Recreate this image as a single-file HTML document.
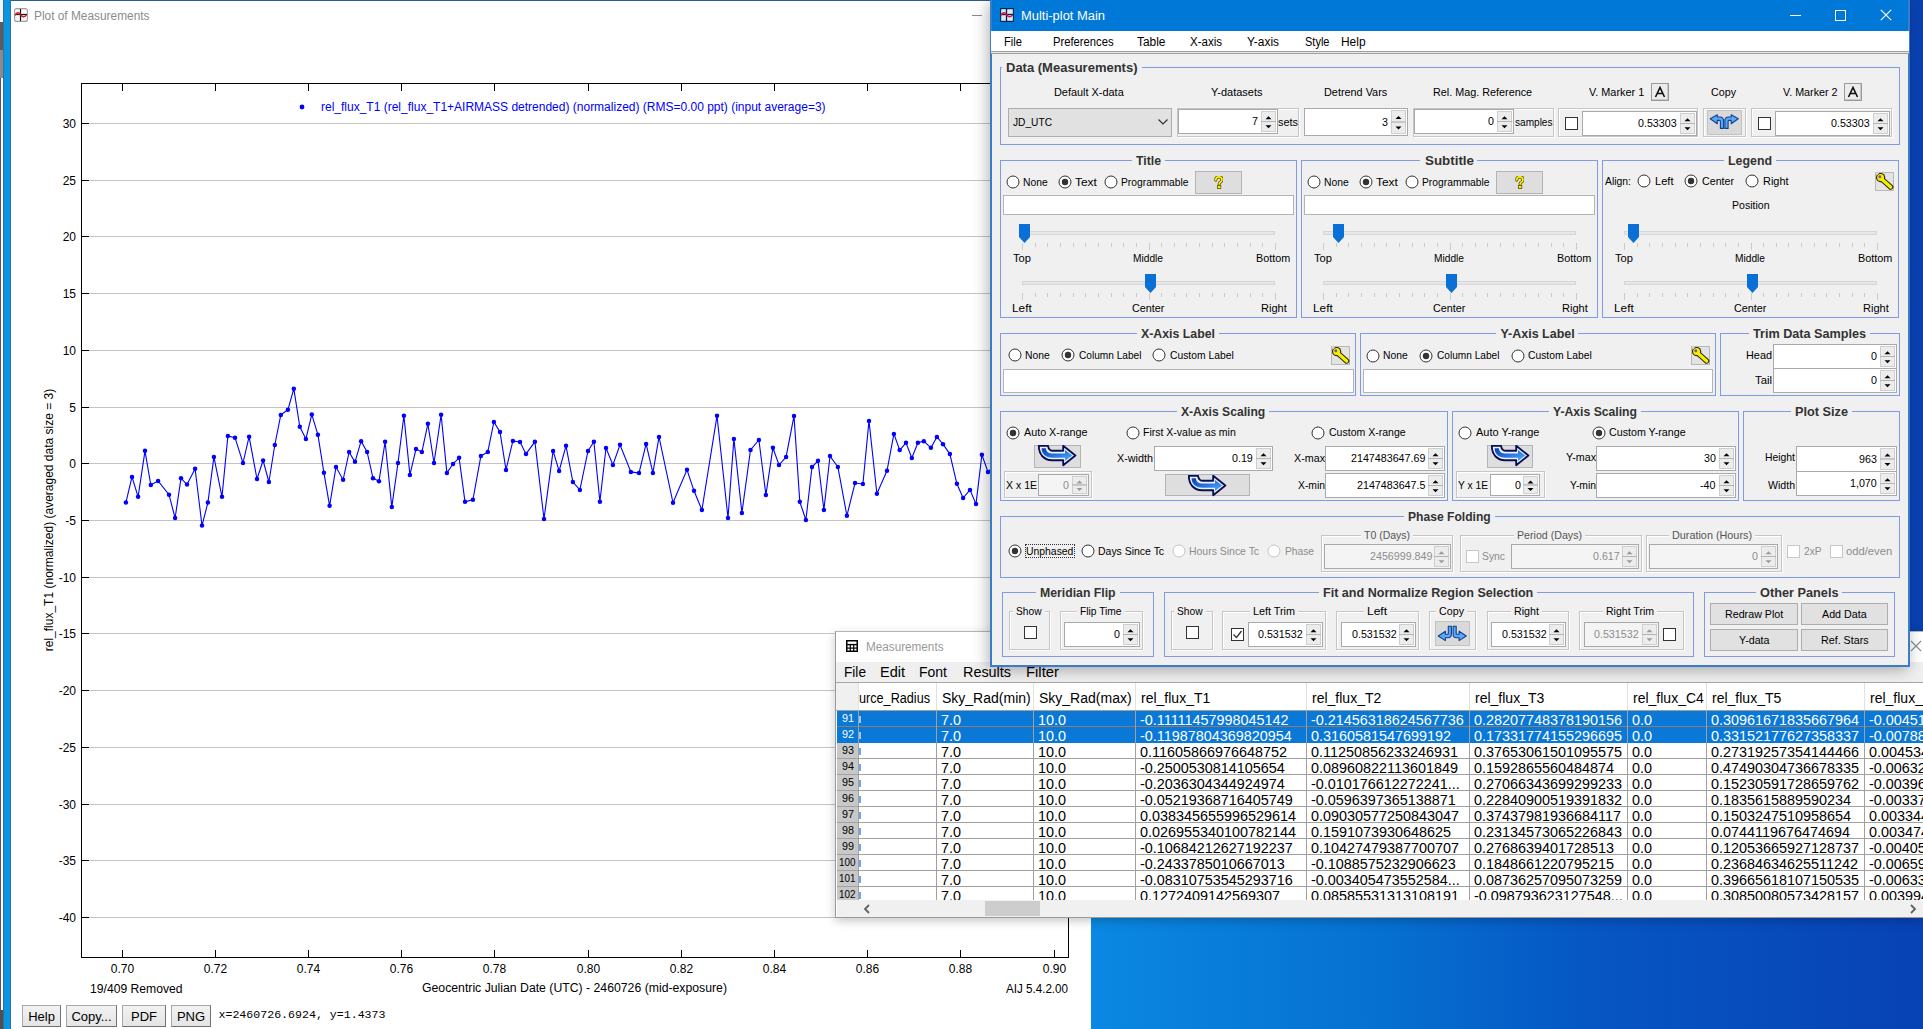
<!DOCTYPE html>
<html><head><meta charset="utf-8"><title>AstroImageJ Multi-plot</title>
<style>
html,body{margin:0;padding:0;}
body{width:1923px;height:1029px;overflow:hidden;position:relative;background:#fff;font-family:"Liberation Sans",sans-serif;}
div{position:absolute;box-sizing:border-box;}
.t{white-space:nowrap;line-height:1;}
svg{position:absolute;}
</style></head><body>
<div style="left:0px;top:0px;width:3px;height:22px;background:#f4f4f4"></div><div style="left:0px;top:22px;width:3px;height:28px;background:#5e5a5e"></div><div style="left:0px;top:50px;width:3px;height:28px;background:#8c888c"></div><div style="left:0px;top:78px;width:3px;height:932px;background:#fbfdff;border-left:1px solid #5a5060"></div><div style="left:0px;top:1010px;width:3px;height:19px;background:#505050"></div><div style="left:3px;top:0px;width:8px;height:1029px;background:#0a94e2;border-left:1px solid #2a7498;border-right:1px solid #2a7498"></div><div style="left:11px;top:0px;width:1080px;height:1px;background:#2a5d8f"></div><div style="left:11px;top:1px;width:1080px;height:1028px;background:#fff"></div><svg style="left:14px;top:8px" width="14" height="14" viewBox="0 0 14 14"><rect x="0.6" y="0.6" width="12.8" height="12.8" rx="2" fill="#f6fafa" stroke="#a89a9a" stroke-width="1.1"/><line x1="6.5" y1="1" x2="6.5" y2="13" stroke="#151515" stroke-width="1.2"/><line x1="1" y1="6.5" x2="13" y2="6.5" stroke="#151515" stroke-width="1.2"/><path d="M1 7.3 C2.5 4.5 4.5 3.6 6.5 6.5 C8.5 9.5 10.5 9.5 12.3 7" fill="none" stroke="#d01830" stroke-width="1.4"/></svg><div class="t" style="left:34.00px;top:10.14px;font-size:12px;color:#8c8c8c;font-family:'Liberation Sans',sans-serif;transform:scaleX(0.9895);transform-origin:0 0;">Plot of Measurements</div><div style="left:972px;top:15px;width:10px;height:1px;background:#8a8a8a"></div><svg style="left:0;top:0" width="1091" height="1029" viewBox="0 0 1091 1029"><rect x="82" y="123" width="986" height="1" fill="#c4c4c4"/><rect x="82" y="180" width="986" height="1" fill="#c4c4c4"/><rect x="82" y="236" width="986" height="1" fill="#c4c4c4"/><rect x="82" y="293" width="986" height="1" fill="#c4c4c4"/><rect x="82" y="350" width="986" height="1" fill="#c4c4c4"/><rect x="82" y="407" width="986" height="1" fill="#c4c4c4"/><rect x="82" y="463" width="986" height="1" fill="#c4c4c4"/><rect x="82" y="520" width="986" height="1" fill="#c4c4c4"/><rect x="82" y="577" width="986" height="1" fill="#c4c4c4"/><rect x="82" y="633" width="986" height="1" fill="#c4c4c4"/><rect x="82" y="690" width="986" height="1" fill="#c4c4c4"/><rect x="82" y="747" width="986" height="1" fill="#c4c4c4"/><rect x="82" y="804" width="986" height="1" fill="#c4c4c4"/><rect x="82" y="860" width="986" height="1" fill="#c4c4c4"/><rect x="82" y="917" width="986" height="1" fill="#c4c4c4"/><rect x="81" y="83" width="988" height="1" fill="#000"/><rect x="81" y="957" width="988" height="1" fill="#000"/><rect x="81" y="83" width="1" height="875" fill="#000"/><rect x="1068" y="83" width="1" height="875" fill="#000"/><rect x="82" y="123" width="7" height="1" fill="#000"/><rect x="1061" y="123" width="7" height="1" fill="#000"/><rect x="82" y="180" width="7" height="1" fill="#000"/><rect x="1061" y="180" width="7" height="1" fill="#000"/><rect x="82" y="236" width="7" height="1" fill="#000"/><rect x="1061" y="236" width="7" height="1" fill="#000"/><rect x="82" y="293" width="7" height="1" fill="#000"/><rect x="1061" y="293" width="7" height="1" fill="#000"/><rect x="82" y="350" width="7" height="1" fill="#000"/><rect x="1061" y="350" width="7" height="1" fill="#000"/><rect x="82" y="407" width="7" height="1" fill="#000"/><rect x="1061" y="407" width="7" height="1" fill="#000"/><rect x="82" y="463" width="7" height="1" fill="#000"/><rect x="1061" y="463" width="7" height="1" fill="#000"/><rect x="82" y="520" width="7" height="1" fill="#000"/><rect x="1061" y="520" width="7" height="1" fill="#000"/><rect x="82" y="577" width="7" height="1" fill="#000"/><rect x="1061" y="577" width="7" height="1" fill="#000"/><rect x="82" y="633" width="7" height="1" fill="#000"/><rect x="1061" y="633" width="7" height="1" fill="#000"/><rect x="82" y="690" width="7" height="1" fill="#000"/><rect x="1061" y="690" width="7" height="1" fill="#000"/><rect x="82" y="747" width="7" height="1" fill="#000"/><rect x="1061" y="747" width="7" height="1" fill="#000"/><rect x="82" y="804" width="7" height="1" fill="#000"/><rect x="1061" y="804" width="7" height="1" fill="#000"/><rect x="82" y="860" width="7" height="1" fill="#000"/><rect x="1061" y="860" width="7" height="1" fill="#000"/><rect x="82" y="917" width="7" height="1" fill="#000"/><rect x="1061" y="917" width="7" height="1" fill="#000"/><rect x="122" y="84" width="1" height="7" fill="#000"/><rect x="122" y="950" width="1" height="7" fill="#000"/><rect x="215" y="84" width="1" height="7" fill="#000"/><rect x="215" y="950" width="1" height="7" fill="#000"/><rect x="308" y="84" width="1" height="7" fill="#000"/><rect x="308" y="950" width="1" height="7" fill="#000"/><rect x="401" y="84" width="1" height="7" fill="#000"/><rect x="401" y="950" width="1" height="7" fill="#000"/><rect x="494" y="84" width="1" height="7" fill="#000"/><rect x="494" y="950" width="1" height="7" fill="#000"/><rect x="588" y="84" width="1" height="7" fill="#000"/><rect x="588" y="950" width="1" height="7" fill="#000"/><rect x="681" y="84" width="1" height="7" fill="#000"/><rect x="681" y="950" width="1" height="7" fill="#000"/><rect x="774" y="84" width="1" height="7" fill="#000"/><rect x="774" y="950" width="1" height="7" fill="#000"/><rect x="867" y="84" width="1" height="7" fill="#000"/><rect x="867" y="950" width="1" height="7" fill="#000"/><rect x="960" y="84" width="1" height="7" fill="#000"/><rect x="960" y="950" width="1" height="7" fill="#000"/><rect x="1054" y="84" width="1" height="7" fill="#000"/><rect x="1054" y="950" width="1" height="7" fill="#000"/><polyline points="125.9,502.6 132.0,476.9 138.1,496.8 145.0,450.8 150.8,485.0 158.1,481.0 169.0,494.7 175.1,518.0 181.0,478.2 187.0,484.6 195.1,468.8 202.0,525.6 207.9,502.6 213.9,456.9 222.0,496.8 227.9,435.9 235.0,437.7 243.0,463.0 249.1,436.7 257.0,479.0 263.1,460.5 268.9,482.0 274.8,445.0 280.8,414.9 287.9,409.8 293.8,388.7 299.8,426.8 305.9,438.9 311.8,414.6 317.9,434.7 323.9,472.7 329.6,505.8 336.0,467.1 343.1,479.8 349.1,452.1 355.0,461.8 361.1,441.2 367.1,451.9 373.0,478.2 379.0,481.2 385.1,441.8 391.8,506.9 398.0,463.0 403.9,415.8 409.9,474.9 416.0,449.0 421.9,451.9 427.9,423.8 434.0,463.0 441.1,414.8 446.9,472.9 453.0,464.0 459.1,457.7 465.0,501.8 472.9,499.8 480.9,455.9 487.8,451.9 493.9,422.0 500.0,431.9 506.0,469.9 512.9,440.9 520.0,442.0 526.0,453.9 534.9,441.8 544.0,519.0 553.1,450.9 559.1,470.9 566.0,445.8 572.9,482.1 579.9,489.9 588.0,450.9 593.9,441.8 599.9,501.8 606.0,448.0 612.9,465.0 620.0,444.8 630.9,471.9 639.0,473.1 646.1,443.9 652.9,472.9 659.0,436.9 673.0,502.8 687.0,469.8 694.0,490.8 701.9,510.0 717.0,415.8 728.0,518.0 733.9,438.9 741.9,512.9 750.5,450.0 758.9,440.0 765.9,494.9 772.9,447.8 779.0,465.0 786.1,456.9 794.0,415.9 799.8,501.8 805.9,520.0 812.0,467.0 818.0,460.8 823.9,509.9 830.0,456.1 837.9,467.0 846.9,515.8 855.0,483.0 862.9,484.0 869.0,420.9 876.9,493.7 887.0,470.8 893.9,433.9 899.7,450.1 906.0,442.8 911.8,457.9 917.9,442.8 923.8,441.2 930.9,447.8 936.9,436.9 943.0,444.2 949.9,454.1 956.9,483.8 963.1,498.0 970.0,489.9 976.0,504.1 981.9,454.7 988.0,471.9 994.0,466.0" fill="none" stroke="#0000ff" stroke-width="1.1"/><circle cx="125.9" cy="502.6" r="2.25" fill="#0000ff"/><circle cx="132.0" cy="476.9" r="2.25" fill="#0000ff"/><circle cx="138.1" cy="496.8" r="2.25" fill="#0000ff"/><circle cx="145.0" cy="450.8" r="2.25" fill="#0000ff"/><circle cx="150.8" cy="485.0" r="2.25" fill="#0000ff"/><circle cx="158.1" cy="481.0" r="2.25" fill="#0000ff"/><circle cx="169.0" cy="494.7" r="2.25" fill="#0000ff"/><circle cx="175.1" cy="518.0" r="2.25" fill="#0000ff"/><circle cx="181.0" cy="478.2" r="2.25" fill="#0000ff"/><circle cx="187.0" cy="484.6" r="2.25" fill="#0000ff"/><circle cx="195.1" cy="468.8" r="2.25" fill="#0000ff"/><circle cx="202.0" cy="525.6" r="2.25" fill="#0000ff"/><circle cx="207.9" cy="502.6" r="2.25" fill="#0000ff"/><circle cx="213.9" cy="456.9" r="2.25" fill="#0000ff"/><circle cx="222.0" cy="496.8" r="2.25" fill="#0000ff"/><circle cx="227.9" cy="435.9" r="2.25" fill="#0000ff"/><circle cx="235.0" cy="437.7" r="2.25" fill="#0000ff"/><circle cx="243.0" cy="463.0" r="2.25" fill="#0000ff"/><circle cx="249.1" cy="436.7" r="2.25" fill="#0000ff"/><circle cx="257.0" cy="479.0" r="2.25" fill="#0000ff"/><circle cx="263.1" cy="460.5" r="2.25" fill="#0000ff"/><circle cx="268.9" cy="482.0" r="2.25" fill="#0000ff"/><circle cx="274.8" cy="445.0" r="2.25" fill="#0000ff"/><circle cx="280.8" cy="414.9" r="2.25" fill="#0000ff"/><circle cx="287.9" cy="409.8" r="2.25" fill="#0000ff"/><circle cx="293.8" cy="388.7" r="2.25" fill="#0000ff"/><circle cx="299.8" cy="426.8" r="2.25" fill="#0000ff"/><circle cx="305.9" cy="438.9" r="2.25" fill="#0000ff"/><circle cx="311.8" cy="414.6" r="2.25" fill="#0000ff"/><circle cx="317.9" cy="434.7" r="2.25" fill="#0000ff"/><circle cx="323.9" cy="472.7" r="2.25" fill="#0000ff"/><circle cx="329.6" cy="505.8" r="2.25" fill="#0000ff"/><circle cx="336.0" cy="467.1" r="2.25" fill="#0000ff"/><circle cx="343.1" cy="479.8" r="2.25" fill="#0000ff"/><circle cx="349.1" cy="452.1" r="2.25" fill="#0000ff"/><circle cx="355.0" cy="461.8" r="2.25" fill="#0000ff"/><circle cx="361.1" cy="441.2" r="2.25" fill="#0000ff"/><circle cx="367.1" cy="451.9" r="2.25" fill="#0000ff"/><circle cx="373.0" cy="478.2" r="2.25" fill="#0000ff"/><circle cx="379.0" cy="481.2" r="2.25" fill="#0000ff"/><circle cx="385.1" cy="441.8" r="2.25" fill="#0000ff"/><circle cx="391.8" cy="506.9" r="2.25" fill="#0000ff"/><circle cx="398.0" cy="463.0" r="2.25" fill="#0000ff"/><circle cx="403.9" cy="415.8" r="2.25" fill="#0000ff"/><circle cx="409.9" cy="474.9" r="2.25" fill="#0000ff"/><circle cx="416.0" cy="449.0" r="2.25" fill="#0000ff"/><circle cx="421.9" cy="451.9" r="2.25" fill="#0000ff"/><circle cx="427.9" cy="423.8" r="2.25" fill="#0000ff"/><circle cx="434.0" cy="463.0" r="2.25" fill="#0000ff"/><circle cx="441.1" cy="414.8" r="2.25" fill="#0000ff"/><circle cx="446.9" cy="472.9" r="2.25" fill="#0000ff"/><circle cx="453.0" cy="464.0" r="2.25" fill="#0000ff"/><circle cx="459.1" cy="457.7" r="2.25" fill="#0000ff"/><circle cx="465.0" cy="501.8" r="2.25" fill="#0000ff"/><circle cx="472.9" cy="499.8" r="2.25" fill="#0000ff"/><circle cx="480.9" cy="455.9" r="2.25" fill="#0000ff"/><circle cx="487.8" cy="451.9" r="2.25" fill="#0000ff"/><circle cx="493.9" cy="422.0" r="2.25" fill="#0000ff"/><circle cx="500.0" cy="431.9" r="2.25" fill="#0000ff"/><circle cx="506.0" cy="469.9" r="2.25" fill="#0000ff"/><circle cx="512.9" cy="440.9" r="2.25" fill="#0000ff"/><circle cx="520.0" cy="442.0" r="2.25" fill="#0000ff"/><circle cx="526.0" cy="453.9" r="2.25" fill="#0000ff"/><circle cx="534.9" cy="441.8" r="2.25" fill="#0000ff"/><circle cx="544.0" cy="519.0" r="2.25" fill="#0000ff"/><circle cx="553.1" cy="450.9" r="2.25" fill="#0000ff"/><circle cx="559.1" cy="470.9" r="2.25" fill="#0000ff"/><circle cx="566.0" cy="445.8" r="2.25" fill="#0000ff"/><circle cx="572.9" cy="482.1" r="2.25" fill="#0000ff"/><circle cx="579.9" cy="489.9" r="2.25" fill="#0000ff"/><circle cx="588.0" cy="450.9" r="2.25" fill="#0000ff"/><circle cx="593.9" cy="441.8" r="2.25" fill="#0000ff"/><circle cx="599.9" cy="501.8" r="2.25" fill="#0000ff"/><circle cx="606.0" cy="448.0" r="2.25" fill="#0000ff"/><circle cx="612.9" cy="465.0" r="2.25" fill="#0000ff"/><circle cx="620.0" cy="444.8" r="2.25" fill="#0000ff"/><circle cx="630.9" cy="471.9" r="2.25" fill="#0000ff"/><circle cx="639.0" cy="473.1" r="2.25" fill="#0000ff"/><circle cx="646.1" cy="443.9" r="2.25" fill="#0000ff"/><circle cx="652.9" cy="472.9" r="2.25" fill="#0000ff"/><circle cx="659.0" cy="436.9" r="2.25" fill="#0000ff"/><circle cx="673.0" cy="502.8" r="2.25" fill="#0000ff"/><circle cx="687.0" cy="469.8" r="2.25" fill="#0000ff"/><circle cx="694.0" cy="490.8" r="2.25" fill="#0000ff"/><circle cx="701.9" cy="510.0" r="2.25" fill="#0000ff"/><circle cx="717.0" cy="415.8" r="2.25" fill="#0000ff"/><circle cx="728.0" cy="518.0" r="2.25" fill="#0000ff"/><circle cx="733.9" cy="438.9" r="2.25" fill="#0000ff"/><circle cx="741.9" cy="512.9" r="2.25" fill="#0000ff"/><circle cx="750.5" cy="450.0" r="2.25" fill="#0000ff"/><circle cx="758.9" cy="440.0" r="2.25" fill="#0000ff"/><circle cx="765.9" cy="494.9" r="2.25" fill="#0000ff"/><circle cx="772.9" cy="447.8" r="2.25" fill="#0000ff"/><circle cx="779.0" cy="465.0" r="2.25" fill="#0000ff"/><circle cx="786.1" cy="456.9" r="2.25" fill="#0000ff"/><circle cx="794.0" cy="415.9" r="2.25" fill="#0000ff"/><circle cx="799.8" cy="501.8" r="2.25" fill="#0000ff"/><circle cx="805.9" cy="520.0" r="2.25" fill="#0000ff"/><circle cx="812.0" cy="467.0" r="2.25" fill="#0000ff"/><circle cx="818.0" cy="460.8" r="2.25" fill="#0000ff"/><circle cx="823.9" cy="509.9" r="2.25" fill="#0000ff"/><circle cx="830.0" cy="456.1" r="2.25" fill="#0000ff"/><circle cx="837.9" cy="467.0" r="2.25" fill="#0000ff"/><circle cx="846.9" cy="515.8" r="2.25" fill="#0000ff"/><circle cx="855.0" cy="483.0" r="2.25" fill="#0000ff"/><circle cx="862.9" cy="484.0" r="2.25" fill="#0000ff"/><circle cx="869.0" cy="420.9" r="2.25" fill="#0000ff"/><circle cx="876.9" cy="493.7" r="2.25" fill="#0000ff"/><circle cx="887.0" cy="470.8" r="2.25" fill="#0000ff"/><circle cx="893.9" cy="433.9" r="2.25" fill="#0000ff"/><circle cx="899.7" cy="450.1" r="2.25" fill="#0000ff"/><circle cx="906.0" cy="442.8" r="2.25" fill="#0000ff"/><circle cx="911.8" cy="457.9" r="2.25" fill="#0000ff"/><circle cx="917.9" cy="442.8" r="2.25" fill="#0000ff"/><circle cx="923.8" cy="441.2" r="2.25" fill="#0000ff"/><circle cx="930.9" cy="447.8" r="2.25" fill="#0000ff"/><circle cx="936.9" cy="436.9" r="2.25" fill="#0000ff"/><circle cx="943.0" cy="444.2" r="2.25" fill="#0000ff"/><circle cx="949.9" cy="454.1" r="2.25" fill="#0000ff"/><circle cx="956.9" cy="483.8" r="2.25" fill="#0000ff"/><circle cx="963.1" cy="498.0" r="2.25" fill="#0000ff"/><circle cx="970.0" cy="489.9" r="2.25" fill="#0000ff"/><circle cx="976.0" cy="504.1" r="2.25" fill="#0000ff"/><circle cx="981.9" cy="454.7" r="2.25" fill="#0000ff"/><circle cx="988.0" cy="471.9" r="2.25" fill="#0000ff"/><circle cx="994.0" cy="466.0" r="2.25" fill="#0000ff"/><circle cx="302" cy="107" r="2.4" fill="#0000ff"/></svg><div class="t" style="left:62.65px;top:117.64px;font-size:12px;color:#000;font-family:'Liberation Sans',sans-serif;">30</div><div class="t" style="left:62.65px;top:174.64px;font-size:12px;color:#000;font-family:'Liberation Sans',sans-serif;">25</div><div class="t" style="left:62.65px;top:230.64px;font-size:12px;color:#000;font-family:'Liberation Sans',sans-serif;">20</div><div class="t" style="left:62.65px;top:287.64px;font-size:12px;color:#000;font-family:'Liberation Sans',sans-serif;">15</div><div class="t" style="left:62.65px;top:344.64px;font-size:12px;color:#000;font-family:'Liberation Sans',sans-serif;">10</div><div class="t" style="left:69.33px;top:401.64px;font-size:12px;color:#000;font-family:'Liberation Sans',sans-serif;">5</div><div class="t" style="left:69.33px;top:457.64px;font-size:12px;color:#000;font-family:'Liberation Sans',sans-serif;">0</div><div class="t" style="left:65.33px;top:514.64px;font-size:12px;color:#000;font-family:'Liberation Sans',sans-serif;">-5</div><div class="t" style="left:58.66px;top:571.64px;font-size:12px;color:#000;font-family:'Liberation Sans',sans-serif;">-10</div><div class="t" style="left:58.66px;top:627.64px;font-size:12px;color:#000;font-family:'Liberation Sans',sans-serif;">-15</div><div class="t" style="left:58.66px;top:684.64px;font-size:12px;color:#000;font-family:'Liberation Sans',sans-serif;">-20</div><div class="t" style="left:58.66px;top:741.64px;font-size:12px;color:#000;font-family:'Liberation Sans',sans-serif;">-25</div><div class="t" style="left:58.66px;top:798.64px;font-size:12px;color:#000;font-family:'Liberation Sans',sans-serif;">-30</div><div class="t" style="left:58.66px;top:854.64px;font-size:12px;color:#000;font-family:'Liberation Sans',sans-serif;">-35</div><div class="t" style="left:58.66px;top:911.64px;font-size:12px;color:#000;font-family:'Liberation Sans',sans-serif;">-40</div><div class="t" style="left:110.82px;top:963.14px;font-size:12px;color:#000;font-family:'Liberation Sans',sans-serif;">0.70</div><div class="t" style="left:203.82px;top:963.14px;font-size:12px;color:#000;font-family:'Liberation Sans',sans-serif;">0.72</div><div class="t" style="left:296.82px;top:963.14px;font-size:12px;color:#000;font-family:'Liberation Sans',sans-serif;">0.74</div><div class="t" style="left:389.82px;top:963.14px;font-size:12px;color:#000;font-family:'Liberation Sans',sans-serif;">0.76</div><div class="t" style="left:482.82px;top:963.14px;font-size:12px;color:#000;font-family:'Liberation Sans',sans-serif;">0.78</div><div class="t" style="left:576.82px;top:963.14px;font-size:12px;color:#000;font-family:'Liberation Sans',sans-serif;">0.80</div><div class="t" style="left:669.82px;top:963.14px;font-size:12px;color:#000;font-family:'Liberation Sans',sans-serif;">0.82</div><div class="t" style="left:762.82px;top:963.14px;font-size:12px;color:#000;font-family:'Liberation Sans',sans-serif;">0.84</div><div class="t" style="left:855.82px;top:963.14px;font-size:12px;color:#000;font-family:'Liberation Sans',sans-serif;">0.86</div><div class="t" style="left:948.82px;top:963.14px;font-size:12px;color:#000;font-family:'Liberation Sans',sans-serif;">0.88</div><div class="t" style="left:1042.82px;top:963.14px;font-size:12px;color:#000;font-family:'Liberation Sans',sans-serif;">0.90</div><div class="t" style="left:321.00px;top:101.14px;font-size:12px;color:#0000ff;font-family:'Liberation Sans',sans-serif;">rel_flux_T1 (rel_flux_T1+AIRMASS detrended) (normalized) (RMS=0.00 ppt) (input average=3)</div><div class="t" style="left:48.5px;top:520px;font-size:12px;color:#000;transform:translate(-50%,-50%) rotate(-90deg);transform-origin:50% 50%;">rel_flux_T1 (normalized) (averaged data size = 3)</div><div class="t" style="left:90.00px;top:983.14px;font-size:12px;color:#000;font-family:'Liberation Sans',sans-serif;transform:scaleX(1.0121);transform-origin:0 0;">19/409 Removed</div><div class="t" style="left:422.00px;top:982.14px;font-size:12px;color:#000;font-family:'Liberation Sans',sans-serif;transform:scaleX(1.0208);transform-origin:0 0;">Geocentric Julian Date (UTC) - 2460726 (mid-exposure)</div><div class="t" style="left:1005.50px;top:982.64px;font-size:12px;color:#000;font-family:'Liberation Sans',sans-serif;transform:scaleX(0.9681);transform-origin:0 0;">AIJ 5.4.2.00</div><div style="left:22px;top:1005px;width:39px;height:22px;background:linear-gradient(#f2f2f2,#e4e4e4);border:1px solid #a8a8a8;border-right-color:#707070;border-bottom-color:#707070"></div><div class="t" style="left:28.13px;top:1010.30px;font-size:13px;color:#000;font-family:'Liberation Sans',sans-serif;">Help</div><div style="left:66px;top:1005px;width:51px;height:22px;background:linear-gradient(#f2f2f2,#e4e4e4);border:1px solid #a8a8a8;border-right-color:#707070;border-bottom-color:#707070"></div><div class="t" style="left:71.39px;top:1010.30px;font-size:13px;color:#000;font-family:'Liberation Sans',sans-serif;">Copy...</div><div style="left:122px;top:1005px;width:44px;height:22px;background:linear-gradient(#f2f2f2,#e4e4e4);border:1px solid #a8a8a8;border-right-color:#707070;border-bottom-color:#707070"></div><div class="t" style="left:131.00px;top:1010.30px;font-size:13px;color:#000;font-family:'Liberation Sans',sans-serif;">PDF</div><div style="left:171px;top:1005px;width:40px;height:22px;background:linear-gradient(#f2f2f2,#e4e4e4);border:1px solid #a8a8a8;border-right-color:#707070;border-bottom-color:#707070"></div><div class="t" style="left:176.91px;top:1010.30px;font-size:13px;color:#000;font-family:'Liberation Sans',sans-serif;">PNG</div><div class="t" style="left:218.50px;top:1008.83px;font-size:11.6px;color:#000;font-family:'Liberation Mono',monospace;">x=2460726.6924, y=1.4373</div><div style="left:1909px;top:0px;width:14px;height:632px;background:linear-gradient(90deg,#0a44b8,#0840b0)"></div><div style="left:1091px;top:917px;width:832px;height:112px;background:linear-gradient(90deg,#0a88e2 0%,#0670d0 35%,#0656c4 60%,#0842b4 100%)"></div><div style="left:835px;top:631px;width:1088px;height:287px;background:#fff;border-left:1px solid #9a9a9a;border-top:1px solid #b4b4b4;border-bottom:1px solid #9a9a9a;box-shadow:0 3px 9px rgba(0,0,0,0.22)"></div><svg style="left:846px;top:640px" width="12" height="12" viewBox="0 0 12 12"><rect x="0.75" y="0.75" width="10.5" height="10.5" fill="#fff" stroke="#000" stroke-width="1.5"/><line x1="0" y1="4.6" x2="12" y2="4.6" stroke="#000" stroke-width="1.4"/><line x1="0" y1="8.1" x2="12" y2="8.1" stroke="#000" stroke-width="1.2"/><line x1="4.3" y1="4.6" x2="4.3" y2="12" stroke="#000" stroke-width="1.2"/><line x1="7.7" y1="4.6" x2="7.7" y2="12" stroke="#000" stroke-width="1.2"/></svg><div class="t" style="left:865.50px;top:641.14px;font-size:12px;color:#9a9a9a;font-family:'Liberation Sans',sans-serif;transform:scaleX(0.9765);transform-origin:0 0;">Measurements</div><svg style="left:1909px;top:640px" width="14" height="12" viewBox="0 0 14 12"><path d="M2 1 L12 11 M12 1 L2 11" stroke="#8a8a8a" stroke-width="1.1" fill="none"/></svg><div style="left:836px;top:662px;width:1087px;height:21px;background:#efefef;border-bottom:1px solid #a6a6a6"></div><div class="t" style="left:843.50px;top:663.60px;font-size:15px;color:#000;font-family:'Liberation Sans',sans-serif;transform:scaleX(0.9102);transform-origin:0 0;">File</div><div class="t" style="left:880.00px;top:663.60px;font-size:15px;color:#000;font-family:'Liberation Sans',sans-serif;transform:scaleX(0.9672);transform-origin:0 0;">Edit</div><div class="t" style="left:919.00px;top:663.60px;font-size:15px;color:#000;font-family:'Liberation Sans',sans-serif;transform:scaleX(0.9329);transform-origin:0 0;">Font</div><div class="t" style="left:962.50px;top:663.60px;font-size:15px;color:#000;font-family:'Liberation Sans',sans-serif;transform:scaleX(0.9597);transform-origin:0 0;">Results</div><div class="t" style="left:1026.00px;top:663.60px;font-size:15px;color:#000;font-family:'Liberation Sans',sans-serif;transform:scaleX(0.9900);transform-origin:0 0;">Filter</div><div style="left:836px;top:683px;width:1087px;height:28px;background:#fff;border-bottom:1px solid #a0a0a0"></div><div style="left:836px;top:683px;width:22px;height:27px;background:#f0f0f0"></div><div style="left:858px;top:683px;width:1px;height:27px;background:#e2e2e2"></div><div style="left:936px;top:683px;width:1px;height:27px;background:#e2e2e2"></div><div style="left:1033px;top:683px;width:1px;height:27px;background:#e2e2e2"></div><div style="left:1135px;top:683px;width:1px;height:27px;background:#e2e2e2"></div><div style="left:1306px;top:683px;width:1px;height:27px;background:#e2e2e2"></div><div style="left:1469px;top:683px;width:1px;height:27px;background:#e2e2e2"></div><div style="left:1627px;top:683px;width:1px;height:27px;background:#e2e2e2"></div><div style="left:1706px;top:683px;width:1px;height:27px;background:#e2e2e2"></div><div style="left:1864px;top:683px;width:1px;height:27px;background:#e2e2e2"></div><div class="t" style="left:859.00px;top:691.45px;font-size:14px;color:#000;font-family:'Liberation Sans',sans-serif;transform:scaleX(0.9033);transform-origin:0 0;">urce_Radius</div><div class="t" style="left:942.00px;top:691.45px;font-size:14px;color:#000;font-family:'Liberation Sans',sans-serif;">Sky_Rad(min)</div><div class="t" style="left:1039.00px;top:691.45px;font-size:14px;color:#000;font-family:'Liberation Sans',sans-serif;">Sky_Rad(max)</div><div class="t" style="left:1141.00px;top:691.45px;font-size:14px;color:#000;font-family:'Liberation Sans',sans-serif;">rel_flux_T1</div><div class="t" style="left:1312.00px;top:691.45px;font-size:14px;color:#000;font-family:'Liberation Sans',sans-serif;">rel_flux_T2</div><div class="t" style="left:1475.00px;top:691.45px;font-size:14px;color:#000;font-family:'Liberation Sans',sans-serif;">rel_flux_T3</div><div class="t" style="left:1633.00px;top:691.45px;font-size:14px;color:#000;font-family:'Liberation Sans',sans-serif;">rel_flux_C4</div><div class="t" style="left:1712.00px;top:691.45px;font-size:14px;color:#000;font-family:'Liberation Sans',sans-serif;">rel_flux_T5</div><div class="t" style="left:1870.00px;top:691.45px;font-size:14px;color:#000;font-family:'Liberation Sans',sans-serif;">rel_flux_</div><div style="left:837px;top:711px;width:1086px;height:16px;background:#0a78d7"></div><div style="left:837px;top:711px;width:21px;height:16px;background:#0a78d7"></div><div class="t" style="left:841.50px;top:713.19px;font-size:11px;color:#fff;font-family:'Liberation Sans',sans-serif;transform:scaleX(0.9808);transform-origin:0 0;">91</div><div class="t" style="left:941.00px;top:712.71px;font-size:14.4px;color:#fff;font-family:'Liberation Sans',sans-serif;">7.0</div><div class="t" style="left:1038.00px;top:712.71px;font-size:14.4px;color:#fff;font-family:'Liberation Sans',sans-serif;">10.0</div><div class="t" style="left:1140.00px;top:712.71px;font-size:14.4px;color:#fff;font-family:'Liberation Sans',sans-serif;">-0.11111457998045142</div><div class="t" style="left:1311.00px;top:712.71px;font-size:14.4px;color:#fff;font-family:'Liberation Sans',sans-serif;">-0.21456318624567736</div><div class="t" style="left:1474.00px;top:712.71px;font-size:14.4px;color:#fff;font-family:'Liberation Sans',sans-serif;">0.28207748378190156</div><div class="t" style="left:1632.00px;top:712.71px;font-size:14.4px;color:#fff;font-family:'Liberation Sans',sans-serif;">0.0</div><div class="t" style="left:1711.00px;top:712.71px;font-size:14.4px;color:#fff;font-family:'Liberation Sans',sans-serif;">0.30961671835667964</div><div class="t" style="left:1869.00px;top:712.71px;font-size:14.4px;color:#fff;font-family:'Liberation Sans',sans-serif;">-0.004514186</div><div style="left:837px;top:727px;width:1086px;height:16px;background:#0a78d7"></div><div style="left:837px;top:727px;width:21px;height:16px;background:#0a78d7"></div><div class="t" style="left:841.50px;top:729.19px;font-size:11px;color:#fff;font-family:'Liberation Sans',sans-serif;transform:scaleX(0.9808);transform-origin:0 0;">92</div><div class="t" style="left:941.00px;top:728.71px;font-size:14.4px;color:#fff;font-family:'Liberation Sans',sans-serif;">7.0</div><div class="t" style="left:1038.00px;top:728.71px;font-size:14.4px;color:#fff;font-family:'Liberation Sans',sans-serif;">10.0</div><div class="t" style="left:1140.00px;top:728.71px;font-size:14.4px;color:#fff;font-family:'Liberation Sans',sans-serif;">-0.11987804369820954</div><div class="t" style="left:1311.00px;top:728.71px;font-size:14.4px;color:#fff;font-family:'Liberation Sans',sans-serif;">0.3160581547699192</div><div class="t" style="left:1474.00px;top:728.71px;font-size:14.4px;color:#fff;font-family:'Liberation Sans',sans-serif;">0.17331774155296695</div><div class="t" style="left:1632.00px;top:728.71px;font-size:14.4px;color:#fff;font-family:'Liberation Sans',sans-serif;">0.0</div><div class="t" style="left:1711.00px;top:728.71px;font-size:14.4px;color:#fff;font-family:'Liberation Sans',sans-serif;">0.33152177627358337</div><div class="t" style="left:1869.00px;top:728.71px;font-size:14.4px;color:#fff;font-family:'Liberation Sans',sans-serif;">-0.007884186</div><div style="left:837px;top:743px;width:21px;height:16px;background:#c8c8c8"></div><div class="t" style="left:841.50px;top:745.19px;font-size:11px;color:#000;font-family:'Liberation Sans',sans-serif;transform:scaleX(0.9808);transform-origin:0 0;">93</div><div class="t" style="left:941.00px;top:744.71px;font-size:14.4px;color:#000;font-family:'Liberation Sans',sans-serif;">7.0</div><div class="t" style="left:1038.00px;top:744.71px;font-size:14.4px;color:#000;font-family:'Liberation Sans',sans-serif;">10.0</div><div class="t" style="left:1140.00px;top:744.71px;font-size:14.4px;color:#000;font-family:'Liberation Sans',sans-serif;">0.11605866976648752</div><div class="t" style="left:1311.00px;top:744.71px;font-size:14.4px;color:#000;font-family:'Liberation Sans',sans-serif;">0.11250856233246931</div><div class="t" style="left:1474.00px;top:744.71px;font-size:14.4px;color:#000;font-family:'Liberation Sans',sans-serif;">0.37653061501095575</div><div class="t" style="left:1632.00px;top:744.71px;font-size:14.4px;color:#000;font-family:'Liberation Sans',sans-serif;">0.0</div><div class="t" style="left:1711.00px;top:744.71px;font-size:14.4px;color:#000;font-family:'Liberation Sans',sans-serif;">0.27319257354144466</div><div class="t" style="left:1869.00px;top:744.71px;font-size:14.4px;color:#000;font-family:'Liberation Sans',sans-serif;">0.004534186</div><div style="left:837px;top:759px;width:21px;height:16px;background:#c8c8c8"></div><div class="t" style="left:841.50px;top:761.19px;font-size:11px;color:#000;font-family:'Liberation Sans',sans-serif;transform:scaleX(0.9808);transform-origin:0 0;">94</div><div class="t" style="left:941.00px;top:760.71px;font-size:14.4px;color:#000;font-family:'Liberation Sans',sans-serif;">7.0</div><div class="t" style="left:1038.00px;top:760.71px;font-size:14.4px;color:#000;font-family:'Liberation Sans',sans-serif;">10.0</div><div class="t" style="left:1140.00px;top:760.71px;font-size:14.4px;color:#000;font-family:'Liberation Sans',sans-serif;">-0.2500530814105654</div><div class="t" style="left:1311.00px;top:760.71px;font-size:14.4px;color:#000;font-family:'Liberation Sans',sans-serif;">0.08960822113601849</div><div class="t" style="left:1474.00px;top:760.71px;font-size:14.4px;color:#000;font-family:'Liberation Sans',sans-serif;">0.1592865560484874</div><div class="t" style="left:1632.00px;top:760.71px;font-size:14.4px;color:#000;font-family:'Liberation Sans',sans-serif;">0.0</div><div class="t" style="left:1711.00px;top:760.71px;font-size:14.4px;color:#000;font-family:'Liberation Sans',sans-serif;">0.47490304736678335</div><div class="t" style="left:1869.00px;top:760.71px;font-size:14.4px;color:#000;font-family:'Liberation Sans',sans-serif;">-0.006324186</div><div style="left:837px;top:775px;width:21px;height:16px;background:#c8c8c8"></div><div class="t" style="left:841.50px;top:777.19px;font-size:11px;color:#000;font-family:'Liberation Sans',sans-serif;transform:scaleX(0.9808);transform-origin:0 0;">95</div><div class="t" style="left:941.00px;top:776.71px;font-size:14.4px;color:#000;font-family:'Liberation Sans',sans-serif;">7.0</div><div class="t" style="left:1038.00px;top:776.71px;font-size:14.4px;color:#000;font-family:'Liberation Sans',sans-serif;">10.0</div><div class="t" style="left:1140.00px;top:776.71px;font-size:14.4px;color:#000;font-family:'Liberation Sans',sans-serif;">-0.2036304344924974</div><div class="t" style="left:1311.00px;top:776.71px;font-size:14.4px;color:#000;font-family:'Liberation Sans',sans-serif;">-0.010176612272241...</div><div class="t" style="left:1474.00px;top:776.71px;font-size:14.4px;color:#000;font-family:'Liberation Sans',sans-serif;">0.27066343699299233</div><div class="t" style="left:1632.00px;top:776.71px;font-size:14.4px;color:#000;font-family:'Liberation Sans',sans-serif;">0.0</div><div class="t" style="left:1711.00px;top:776.71px;font-size:14.4px;color:#000;font-family:'Liberation Sans',sans-serif;">0.15230591728659762</div><div class="t" style="left:1869.00px;top:776.71px;font-size:14.4px;color:#000;font-family:'Liberation Sans',sans-serif;">-0.003964186</div><div style="left:837px;top:791px;width:21px;height:16px;background:#c8c8c8"></div><div class="t" style="left:841.50px;top:793.19px;font-size:11px;color:#000;font-family:'Liberation Sans',sans-serif;transform:scaleX(0.9808);transform-origin:0 0;">96</div><div class="t" style="left:941.00px;top:792.71px;font-size:14.4px;color:#000;font-family:'Liberation Sans',sans-serif;">7.0</div><div class="t" style="left:1038.00px;top:792.71px;font-size:14.4px;color:#000;font-family:'Liberation Sans',sans-serif;">10.0</div><div class="t" style="left:1140.00px;top:792.71px;font-size:14.4px;color:#000;font-family:'Liberation Sans',sans-serif;">-0.05219368716405749</div><div class="t" style="left:1311.00px;top:792.71px;font-size:14.4px;color:#000;font-family:'Liberation Sans',sans-serif;">-0.0596397365138871</div><div class="t" style="left:1474.00px;top:792.71px;font-size:14.4px;color:#000;font-family:'Liberation Sans',sans-serif;">0.22840900519391832</div><div class="t" style="left:1632.00px;top:792.71px;font-size:14.4px;color:#000;font-family:'Liberation Sans',sans-serif;">0.0</div><div class="t" style="left:1711.00px;top:792.71px;font-size:14.4px;color:#000;font-family:'Liberation Sans',sans-serif;">0.1835615889590234</div><div class="t" style="left:1869.00px;top:792.71px;font-size:14.4px;color:#000;font-family:'Liberation Sans',sans-serif;">-0.003374186</div><div style="left:837px;top:807px;width:21px;height:16px;background:#c8c8c8"></div><div class="t" style="left:841.50px;top:809.19px;font-size:11px;color:#000;font-family:'Liberation Sans',sans-serif;transform:scaleX(0.9808);transform-origin:0 0;">97</div><div class="t" style="left:941.00px;top:808.71px;font-size:14.4px;color:#000;font-family:'Liberation Sans',sans-serif;">7.0</div><div class="t" style="left:1038.00px;top:808.71px;font-size:14.4px;color:#000;font-family:'Liberation Sans',sans-serif;">10.0</div><div class="t" style="left:1140.00px;top:808.71px;font-size:14.4px;color:#000;font-family:'Liberation Sans',sans-serif;">0.038345655996529614</div><div class="t" style="left:1311.00px;top:808.71px;font-size:14.4px;color:#000;font-family:'Liberation Sans',sans-serif;">0.09030577250843047</div><div class="t" style="left:1474.00px;top:808.71px;font-size:14.4px;color:#000;font-family:'Liberation Sans',sans-serif;">0.37437981936684117</div><div class="t" style="left:1632.00px;top:808.71px;font-size:14.4px;color:#000;font-family:'Liberation Sans',sans-serif;">0.0</div><div class="t" style="left:1711.00px;top:808.71px;font-size:14.4px;color:#000;font-family:'Liberation Sans',sans-serif;">0.1503247510958654</div><div class="t" style="left:1869.00px;top:808.71px;font-size:14.4px;color:#000;font-family:'Liberation Sans',sans-serif;">0.003344186</div><div style="left:837px;top:823px;width:21px;height:16px;background:#c8c8c8"></div><div class="t" style="left:841.50px;top:825.19px;font-size:11px;color:#000;font-family:'Liberation Sans',sans-serif;transform:scaleX(0.9808);transform-origin:0 0;">98</div><div class="t" style="left:941.00px;top:824.71px;font-size:14.4px;color:#000;font-family:'Liberation Sans',sans-serif;">7.0</div><div class="t" style="left:1038.00px;top:824.71px;font-size:14.4px;color:#000;font-family:'Liberation Sans',sans-serif;">10.0</div><div class="t" style="left:1140.00px;top:824.71px;font-size:14.4px;color:#000;font-family:'Liberation Sans',sans-serif;">0.026955340100782144</div><div class="t" style="left:1311.00px;top:824.71px;font-size:14.4px;color:#000;font-family:'Liberation Sans',sans-serif;">0.1591073930648625</div><div class="t" style="left:1474.00px;top:824.71px;font-size:14.4px;color:#000;font-family:'Liberation Sans',sans-serif;">0.23134573065226843</div><div class="t" style="left:1632.00px;top:824.71px;font-size:14.4px;color:#000;font-family:'Liberation Sans',sans-serif;">0.0</div><div class="t" style="left:1711.00px;top:824.71px;font-size:14.4px;color:#000;font-family:'Liberation Sans',sans-serif;">0.0744119676474694</div><div class="t" style="left:1869.00px;top:824.71px;font-size:14.4px;color:#000;font-family:'Liberation Sans',sans-serif;">0.003474186</div><div style="left:837px;top:839px;width:21px;height:16px;background:#c8c8c8"></div><div class="t" style="left:841.50px;top:841.19px;font-size:11px;color:#000;font-family:'Liberation Sans',sans-serif;transform:scaleX(0.9808);transform-origin:0 0;">99</div><div class="t" style="left:941.00px;top:840.71px;font-size:14.4px;color:#000;font-family:'Liberation Sans',sans-serif;">7.0</div><div class="t" style="left:1038.00px;top:840.71px;font-size:14.4px;color:#000;font-family:'Liberation Sans',sans-serif;">10.0</div><div class="t" style="left:1140.00px;top:840.71px;font-size:14.4px;color:#000;font-family:'Liberation Sans',sans-serif;">-0.10684212627192237</div><div class="t" style="left:1311.00px;top:840.71px;font-size:14.4px;color:#000;font-family:'Liberation Sans',sans-serif;">0.10427479387700707</div><div class="t" style="left:1474.00px;top:840.71px;font-size:14.4px;color:#000;font-family:'Liberation Sans',sans-serif;">0.2768639401728513</div><div class="t" style="left:1632.00px;top:840.71px;font-size:14.4px;color:#000;font-family:'Liberation Sans',sans-serif;">0.0</div><div class="t" style="left:1711.00px;top:840.71px;font-size:14.4px;color:#000;font-family:'Liberation Sans',sans-serif;">0.12053665927128737</div><div class="t" style="left:1869.00px;top:840.71px;font-size:14.4px;color:#000;font-family:'Liberation Sans',sans-serif;">-0.004054186</div><div style="left:837px;top:855px;width:21px;height:16px;background:#c8c8c8"></div><div class="t" style="left:839.25px;top:857.19px;font-size:11px;color:#000;font-family:'Liberation Sans',sans-serif;transform:scaleX(0.8991);transform-origin:0 0;">100</div><div class="t" style="left:941.00px;top:856.71px;font-size:14.4px;color:#000;font-family:'Liberation Sans',sans-serif;">7.0</div><div class="t" style="left:1038.00px;top:856.71px;font-size:14.4px;color:#000;font-family:'Liberation Sans',sans-serif;">10.0</div><div class="t" style="left:1140.00px;top:856.71px;font-size:14.4px;color:#000;font-family:'Liberation Sans',sans-serif;">-0.2433785010667013</div><div class="t" style="left:1311.00px;top:856.71px;font-size:14.4px;color:#000;font-family:'Liberation Sans',sans-serif;">-0.1088575232906623</div><div class="t" style="left:1474.00px;top:856.71px;font-size:14.4px;color:#000;font-family:'Liberation Sans',sans-serif;">0.1848661220795215</div><div class="t" style="left:1632.00px;top:856.71px;font-size:14.4px;color:#000;font-family:'Liberation Sans',sans-serif;">0.0</div><div class="t" style="left:1711.00px;top:856.71px;font-size:14.4px;color:#000;font-family:'Liberation Sans',sans-serif;">0.23684634625511242</div><div class="t" style="left:1869.00px;top:856.71px;font-size:14.4px;color:#000;font-family:'Liberation Sans',sans-serif;">-0.006594186</div><div style="left:837px;top:871px;width:21px;height:16px;background:#c8c8c8"></div><div class="t" style="left:839.25px;top:873.19px;font-size:11px;color:#000;font-family:'Liberation Sans',sans-serif;transform:scaleX(0.8991);transform-origin:0 0;">101</div><div class="t" style="left:941.00px;top:872.71px;font-size:14.4px;color:#000;font-family:'Liberation Sans',sans-serif;">7.0</div><div class="t" style="left:1038.00px;top:872.71px;font-size:14.4px;color:#000;font-family:'Liberation Sans',sans-serif;">10.0</div><div class="t" style="left:1140.00px;top:872.71px;font-size:14.4px;color:#000;font-family:'Liberation Sans',sans-serif;">-0.08310753545293716</div><div class="t" style="left:1311.00px;top:872.71px;font-size:14.4px;color:#000;font-family:'Liberation Sans',sans-serif;">-0.003405473552584...</div><div class="t" style="left:1474.00px;top:872.71px;font-size:14.4px;color:#000;font-family:'Liberation Sans',sans-serif;">0.08736257095073259</div><div class="t" style="left:1632.00px;top:872.71px;font-size:14.4px;color:#000;font-family:'Liberation Sans',sans-serif;">0.0</div><div class="t" style="left:1711.00px;top:872.71px;font-size:14.4px;color:#000;font-family:'Liberation Sans',sans-serif;">0.39665618107150535</div><div class="t" style="left:1869.00px;top:872.71px;font-size:14.4px;color:#000;font-family:'Liberation Sans',sans-serif;">-0.006334186</div><div style="left:837px;top:887px;width:21px;height:16px;background:#c8c8c8"></div><div class="t" style="left:839.25px;top:889.19px;font-size:11px;color:#000;font-family:'Liberation Sans',sans-serif;transform:scaleX(0.8991);transform-origin:0 0;">102</div><div class="t" style="left:941.00px;top:888.71px;font-size:14.4px;color:#000;font-family:'Liberation Sans',sans-serif;">7.0</div><div class="t" style="left:1038.00px;top:888.71px;font-size:14.4px;color:#000;font-family:'Liberation Sans',sans-serif;">10.0</div><div class="t" style="left:1140.00px;top:888.71px;font-size:14.4px;color:#000;font-family:'Liberation Sans',sans-serif;">0.1272409142569307</div><div class="t" style="left:1311.00px;top:888.71px;font-size:14.4px;color:#000;font-family:'Liberation Sans',sans-serif;">0.08585531313108191</div><div class="t" style="left:1474.00px;top:888.71px;font-size:14.4px;color:#000;font-family:'Liberation Sans',sans-serif;">-0.098793623127548...</div><div class="t" style="left:1632.00px;top:888.71px;font-size:14.4px;color:#000;font-family:'Liberation Sans',sans-serif;">0.0</div><div class="t" style="left:1711.00px;top:888.71px;font-size:14.4px;color:#000;font-family:'Liberation Sans',sans-serif;">0.30850080573428157</div><div class="t" style="left:1869.00px;top:888.71px;font-size:14.4px;color:#000;font-family:'Liberation Sans',sans-serif;">0.003994186</div><div style="left:837px;top:726px;width:1086px;height:1px;background:#8a7d78"></div><div style="left:837px;top:758px;width:1086px;height:1px;background:#a0a0a0"></div><div style="left:837px;top:774px;width:1086px;height:1px;background:#a0a0a0"></div><div style="left:837px;top:790px;width:1086px;height:1px;background:#a0a0a0"></div><div style="left:837px;top:806px;width:1086px;height:1px;background:#a0a0a0"></div><div style="left:837px;top:822px;width:1086px;height:1px;background:#a0a0a0"></div><div style="left:837px;top:838px;width:1086px;height:1px;background:#a0a0a0"></div><div style="left:837px;top:854px;width:1086px;height:1px;background:#a0a0a0"></div><div style="left:837px;top:870px;width:1086px;height:1px;background:#a0a0a0"></div><div style="left:837px;top:886px;width:1086px;height:1px;background:#a0a0a0"></div><div style="left:858px;top:711px;width:1px;height:189px;background:#a0a0a0"></div><div style="left:936px;top:711px;width:1px;height:189px;background:#a0a0a0"></div><div style="left:1033px;top:711px;width:1px;height:189px;background:#a0a0a0"></div><div style="left:1135px;top:711px;width:1px;height:189px;background:#a0a0a0"></div><div style="left:1306px;top:711px;width:1px;height:189px;background:#a0a0a0"></div><div style="left:1469px;top:711px;width:1px;height:189px;background:#a0a0a0"></div><div style="left:1627px;top:711px;width:1px;height:189px;background:#a0a0a0"></div><div style="left:1706px;top:711px;width:1px;height:189px;background:#a0a0a0"></div><div style="left:1864px;top:711px;width:1px;height:189px;background:#a0a0a0"></div><div style="left:859px;top:716px;width:2px;height:7px;background:#9cc8f0"></div><div style="left:859px;top:732px;width:2px;height:7px;background:#9cc8f0"></div><div style="left:859px;top:748px;width:2px;height:7px;background:#6aa8e8"></div><div style="left:859px;top:764px;width:2px;height:7px;background:#6aa8e8"></div><div style="left:859px;top:780px;width:2px;height:7px;background:#6aa8e8"></div><div style="left:859px;top:796px;width:2px;height:7px;background:#6aa8e8"></div><div style="left:859px;top:812px;width:2px;height:7px;background:#6aa8e8"></div><div style="left:859px;top:828px;width:2px;height:7px;background:#6aa8e8"></div><div style="left:859px;top:844px;width:2px;height:7px;background:#6aa8e8"></div><div style="left:859px;top:860px;width:2px;height:7px;background:#6aa8e8"></div><div style="left:859px;top:876px;width:2px;height:7px;background:#6aa8e8"></div><div style="left:859px;top:892px;width:2px;height:7px;background:#6aa8e8"></div><div style="left:837px;top:900px;width:1086px;height:17px;background:#f0f0f0"></div><div style="left:985px;top:901px;width:55px;height:15px;background:#cdcdcd"></div><svg style="left:862px;top:903px" width="10" height="12" viewBox="0 0 10 12"><path d="M7 2 L3 6 L7 10" stroke="#606060" stroke-width="1.8" fill="none"/></svg><svg style="left:1908px;top:903px" width="10" height="12" viewBox="0 0 10 12"><path d="M3 2 L7 6 L3 10" stroke="#606060" stroke-width="1.8" fill="none"/></svg><div style="left:990px;top:0px;width:920px;height:667px;box-shadow:-2px 3px 14px rgba(0,0,0,0.30)"></div><div style="left:990px;top:0px;width:920px;height:667px;background:#f0f0f0;border:2px solid #3a7cc8;border-top:0"></div><div style="left:992px;top:0px;width:916px;height:31px;background:#0078d7"></div><svg style="left:1000px;top:8px" width="14" height="14" viewBox="0 0 14 14"><rect x="0.6" y="0.6" width="12.8" height="12.8" fill="#d4ecf8" stroke="#0a2a5a" stroke-width="1.2"/><line x1="6.5" y1="1" x2="6.5" y2="13" stroke="#0a1a3a" stroke-width="1.3"/><line x1="1" y1="6.5" x2="13" y2="6.5" stroke="#0a1a3a" stroke-width="1.3"/><path d="M0.8 7.4 C2.5 4.5 4.5 3.6 6.5 6.5 C8.5 9.5 10.5 9.5 12.3 7" fill="none" stroke="#e01040" stroke-width="1.4"/></svg><div class="t" style="left:1020.50px;top:9.72px;font-size:12.5px;color:#fff;font-family:'Liberation Sans',sans-serif;transform:scaleX(1.0336);transform-origin:0 0;">Multi-plot Main</div><div style="left:1790px;top:15px;width:11px;height:1px;background:#fff"></div><div style="left:1835px;top:10px;width:11px;height:11px;border:1px solid #fff"></div><svg style="left:1880px;top:9px" width="12" height="12" viewBox="0 0 12 12"><path d="M0.8 0.8 L11.2 11.2 M11.2 0.8 L0.8 11.2" stroke="#fff" stroke-width="1.2"/></svg><div style="left:991px;top:31px;width:918px;height:20px;background:#fff"></div><div style="left:991px;top:51px;width:918px;height:1px;background:#a0a0a0"></div><div style="left:991px;top:52px;width:918px;height:1px;background:#e6e6e6"></div><div style="left:991px;top:53px;width:918px;height:1px;background:#a0a0a0"></div><div class="t" style="left:1003.50px;top:35.72px;font-size:12.5px;color:#000;font-family:'Liberation Sans',sans-serif;transform:scaleX(0.8937);transform-origin:0 0;">File</div><div class="t" style="left:1052.50px;top:35.72px;font-size:12.5px;color:#000;font-family:'Liberation Sans',sans-serif;transform:scaleX(0.8977);transform-origin:0 0;">Preferences</div><div class="t" style="left:1137.00px;top:35.72px;font-size:12.5px;color:#000;font-family:'Liberation Sans',sans-serif;transform:scaleX(0.9538);transform-origin:0 0;">Table</div><div class="t" style="left:1190.00px;top:35.72px;font-size:12.5px;color:#000;font-family:'Liberation Sans',sans-serif;transform:scaleX(0.9214);transform-origin:0 0;">X-axis</div><div class="t" style="left:1247.00px;top:35.72px;font-size:12.5px;color:#000;font-family:'Liberation Sans',sans-serif;transform:scaleX(0.9529);transform-origin:0 0;">Y-axis</div><div class="t" style="left:1304.50px;top:35.72px;font-size:12.5px;color:#000;font-family:'Liberation Sans',sans-serif;transform:scaleX(0.8816);transform-origin:0 0;">Style</div><div class="t" style="left:1341.00px;top:35.72px;font-size:12.5px;color:#000;font-family:'Liberation Sans',sans-serif;transform:scaleX(0.9531);transform-origin:0 0;">Help</div><div style="left:1000px;top:67px;width:900px;height:78px;border:1px solid #7f9ae6"></div><div style="left:1002px;top:66px;width:140px;height:3px;background:#f0f0f0"></div><div class="t" style="left:1006.30px;top:61.72px;font-size:12.5px;color:#333;font-family:'Liberation Sans',sans-serif;font-weight:bold;transform:scaleX(1.0401);transform-origin:0 0;">Data (Measurements)</div><div class="t" style="left:1054.35px;top:86.57px;font-size:11.5px;color:#000;font-family:'Liberation Sans',sans-serif;transform:scaleX(0.9481);transform-origin:0 0;">Default X-data</div><div class="t" style="left:1211.25px;top:86.57px;font-size:11.5px;color:#000;font-family:'Liberation Sans',sans-serif;transform:scaleX(0.9552);transform-origin:0 0;">Y-datasets</div><div class="t" style="left:1324.40px;top:86.57px;font-size:11.5px;color:#000;font-family:'Liberation Sans',sans-serif;transform:scaleX(0.9447);transform-origin:0 0;">Detrend Vars</div><div class="t" style="left:1433.25px;top:86.57px;font-size:11.5px;color:#000;font-family:'Liberation Sans',sans-serif;transform:scaleX(0.9397);transform-origin:0 0;">Rel. Mag. Reference</div><div class="t" style="left:1589.40px;top:86.57px;font-size:11.5px;color:#000;font-family:'Liberation Sans',sans-serif;transform:scaleX(0.9456);transform-origin:0 0;">V. Marker 1</div><div class="t" style="left:1711.40px;top:86.57px;font-size:11.5px;color:#000;font-family:'Liberation Sans',sans-serif;transform:scaleX(0.9313);transform-origin:0 0;">Copy</div><div class="t" style="left:1782.70px;top:86.57px;font-size:11.5px;color:#000;font-family:'Liberation Sans',sans-serif;transform:scaleX(0.9353);transform-origin:0 0;">V. Marker 2</div><div style="left:1008px;top:108px;width:164px;height:29px;background:#e1e1e1;border:1px solid #adadad"></div><div class="t" style="left:1013.30px;top:116.57px;font-size:11.5px;color:#000;font-family:'Liberation Sans',sans-serif;transform:scaleX(0.8847);transform-origin:0 0;">JD_UTC</div><svg style="left:1157px;top:118px" width="12" height="8" viewBox="0 0 12 8"><path d="M1.5 1.5 L6 6 L10.5 1.5" stroke="#333" stroke-width="1.2" fill="none"/></svg><div style="left:1177px;top:108px;width:122px;height:29px;border:1px solid #c6c6c6;box-shadow:inset 1px 1px 0 #fff, 1px 1px 0 #fff"></div><div style="left:1178px;top:109px;width:100px;height:25px;background:#fff;border:1px solid #a9a9a9"></div><svg style="left:1261px;top:111px" width="15" height="21" viewBox="0 0 15 21"><rect x="0.5" y="0.5" width="14" height="10.0" fill="#ececec" stroke="#cfcfcf"/><rect x="0.5" y="10.5" width="14" height="10.0" fill="#ececec" stroke="#cfcfcf"/><line x1="0" y1="10.5" x2="15" y2="10.5" stroke="#b4b4b4"/><path d="M4.5 8.2 L7.5 5.2 L10.5 8.2 Z" fill="#000"/><path d="M4.5 14.2 L7.5 17.2 L10.5 14.2 Z" fill="#000"/></svg><div class="t" style="left:1252.05px;top:116.07px;font-size:11.5px;color:#000;font-family:'Liberation Sans',sans-serif;transform:scaleX(0.9300);transform-origin:0 0;">7</div><div class="t" style="left:1277.50px;top:116.57px;font-size:11.5px;color:#000;font-family:'Liberation Sans',sans-serif;transform:scaleX(0.9483);transform-origin:0 0;">sets</div><div style="left:1304px;top:108px;width:104px;height:28px;background:#fff;border:1px solid #a9a9a9"></div><svg style="left:1391px;top:110px" width="15" height="24" viewBox="0 0 15 24"><rect x="0.5" y="0.5" width="14" height="11.5" fill="#ececec" stroke="#cfcfcf"/><rect x="0.5" y="12.0" width="14" height="11.5" fill="#ececec" stroke="#cfcfcf"/><line x1="0" y1="12.0" x2="15" y2="12.0" stroke="#b4b4b4"/><path d="M4.5 9.0 L7.5 6.0 L10.5 9.0 Z" fill="#000"/><path d="M4.5 16.5 L7.5 19.5 L10.5 16.5 Z" fill="#000"/></svg><div class="t" style="left:1382.05px;top:116.57px;font-size:11.5px;color:#000;font-family:'Liberation Sans',sans-serif;transform:scaleX(0.9300);transform-origin:0 0;">3</div><div style="left:1413px;top:108px;width:141px;height:29px;border:1px solid #c6c6c6;box-shadow:inset 1px 1px 0 #fff, 1px 1px 0 #fff"></div><div style="left:1414px;top:109px;width:100px;height:25px;background:#fff;border:1px solid #a9a9a9"></div><svg style="left:1497px;top:111px" width="15" height="21" viewBox="0 0 15 21"><rect x="0.5" y="0.5" width="14" height="10.0" fill="#ececec" stroke="#cfcfcf"/><rect x="0.5" y="10.5" width="14" height="10.0" fill="#ececec" stroke="#cfcfcf"/><line x1="0" y1="10.5" x2="15" y2="10.5" stroke="#b4b4b4"/><path d="M4.5 8.2 L7.5 5.2 L10.5 8.2 Z" fill="#000"/><path d="M4.5 14.2 L7.5 17.2 L10.5 14.2 Z" fill="#000"/></svg><div class="t" style="left:1488.05px;top:116.07px;font-size:11.5px;color:#000;font-family:'Liberation Sans',sans-serif;transform:scaleX(0.9300);transform-origin:0 0;">0</div><div class="t" style="left:1515.00px;top:116.57px;font-size:11.5px;color:#000;font-family:'Liberation Sans',sans-serif;transform:scaleX(0.8758);transform-origin:0 0;">samples</div><div style="left:1558px;top:108px;width:140px;height:29px;border:1px solid #c6c6c6;box-shadow:inset 1px 1px 0 #fff, 1px 1px 0 #fff"></div><svg style="left:1565px;top:117px" width="13" height="13" viewBox="0 0 13 13"><rect x="0.5" y="0.5" width="12" height="12" fill="#fff" stroke="#333"/></svg><div style="left:1582px;top:111px;width:115px;height:25px;background:#fff;border:1px solid #a9a9a9"></div><svg style="left:1680px;top:113px" width="15" height="21" viewBox="0 0 15 21"><rect x="0.5" y="0.5" width="14" height="10.0" fill="#ececec" stroke="#cfcfcf"/><rect x="0.5" y="10.5" width="14" height="10.0" fill="#ececec" stroke="#cfcfcf"/><line x1="0" y1="10.5" x2="15" y2="10.5" stroke="#b4b4b4"/><path d="M4.5 8.2 L7.5 5.2 L10.5 8.2 Z" fill="#000"/><path d="M4.5 14.2 L7.5 17.2 L10.5 14.2 Z" fill="#000"/></svg><div class="t" style="left:1638.34px;top:118.07px;font-size:11.5px;color:#000;font-family:'Liberation Sans',sans-serif;transform:scaleX(0.9300);transform-origin:0 0;">0.53303</div><div style="left:1651px;top:83px;width:18px;height:18px;background:#ececec;border:1px solid #9a9a9a;box-shadow:inset -1px -1px 0 #c8c8c8"></div><svg style="left:1654px;top:86px" width="12" height="12" viewBox="0 0 12 12"><path d="M1.5 11 L6 1.5 L10.5 11 M3.3 7.5 H8.7" stroke="#111" stroke-width="1.6" fill="none"/></svg><div style="left:1703px;top:108px;width:43px;height:29px;border:1px solid #c6c6c6;box-shadow:inset 1px 1px 0 #fff, 1px 1px 0 #fff"></div><div style="left:1707px;top:110px;width:35px;height:25px;background:#d9d9d9;border:1px solid #c2c2c2"></div><svg style="left:1707px;top:110px" width="35" height="25" viewBox="0 0 35 25"><path d="M3.2 8.7 L10.3 4.8 L10.3 7 L13 7 C15.5 7 16.6 8.5 16.6 11 L16.6 18.4 L13.4 18.4 L13.4 11.5 C13.4 10.7 13 10.4 12.5 10.4 L10.3 10.4 L10.3 13.7 Z" fill="#56aaf6" stroke="#153f90" stroke-width="1.1" stroke-linejoin="round"/><path d="M31.3 8.7 L24.2 4.8 L24.2 7 L21.5 7 C19 7 17.9 8.5 17.9 11 L17.9 18.4 L21.1 18.4 L21.1 11.5 C21.1 10.7 21.5 10.4 22 10.4 L24.2 10.4 L24.2 13.7 Z" fill="#56aaf6" stroke="#153f90" stroke-width="1.1" stroke-linejoin="round"/></svg><div style="left:1751px;top:108px;width:141px;height:29px;border:1px solid #c6c6c6;box-shadow:inset 1px 1px 0 #fff, 1px 1px 0 #fff"></div><svg style="left:1758px;top:117px" width="13" height="13" viewBox="0 0 13 13"><rect x="0.5" y="0.5" width="12" height="12" fill="#fff" stroke="#333"/></svg><div style="left:1775px;top:111px;width:115px;height:25px;background:#fff;border:1px solid #a9a9a9"></div><svg style="left:1873px;top:113px" width="15" height="21" viewBox="0 0 15 21"><rect x="0.5" y="0.5" width="14" height="10.0" fill="#ececec" stroke="#cfcfcf"/><rect x="0.5" y="10.5" width="14" height="10.0" fill="#ececec" stroke="#cfcfcf"/><line x1="0" y1="10.5" x2="15" y2="10.5" stroke="#b4b4b4"/><path d="M4.5 8.2 L7.5 5.2 L10.5 8.2 Z" fill="#000"/><path d="M4.5 14.2 L7.5 17.2 L10.5 14.2 Z" fill="#000"/></svg><div class="t" style="left:1831.34px;top:118.07px;font-size:11.5px;color:#000;font-family:'Liberation Sans',sans-serif;transform:scaleX(0.9300);transform-origin:0 0;">0.53303</div><div style="left:1844px;top:83px;width:18px;height:18px;background:#ececec;border:1px solid #9a9a9a;box-shadow:inset -1px -1px 0 #c8c8c8"></div><svg style="left:1847px;top:86px" width="12" height="12" viewBox="0 0 12 12"><path d="M1.5 11 L6 1.5 L10.5 11 M3.3 7.5 H8.7" stroke="#111" stroke-width="1.6" fill="none"/></svg><div style="left:1000px;top:160px;width:297px;height:158px;border:1px solid #7f9ae6"></div><div style="left:1132px;top:159px;width:33px;height:3px;background:#f0f0f0"></div><div class="t" style="left:1135.50px;top:154.72px;font-size:12.5px;color:#333;font-family:'Liberation Sans',sans-serif;font-weight:bold;transform:scaleX(0.9815);transform-origin:0 0;">Title</div><svg style="left:1006.4px;top:175.3px" width="14" height="14" viewBox="0 0 14 14"><circle cx="7" cy="7" r="6" fill="#fff" stroke="#333" stroke-width="1"/></svg><div class="t" style="left:1023.30px;top:177.07px;font-size:11.5px;color:#000;font-family:'Liberation Sans',sans-serif;transform:scaleX(0.8985);transform-origin:0 0;">None</div><svg style="left:1057.5px;top:175.3px" width="14" height="14" viewBox="0 0 14 14"><circle cx="7" cy="7" r="6" fill="#fff" stroke="#333" stroke-width="1"/><circle cx="7" cy="7" r="3.2" fill="#333"/></svg><div class="t" style="left:1074.60px;top:177.07px;font-size:11.5px;color:#000;font-family:'Liberation Sans',sans-serif;transform:scaleX(1.0384);transform-origin:0 0;">Text</div><svg style="left:1104.3px;top:175.3px" width="14" height="14" viewBox="0 0 14 14"><circle cx="7" cy="7" r="6" fill="#fff" stroke="#333" stroke-width="1"/></svg><div class="t" style="left:1121.30px;top:177.07px;font-size:11.5px;color:#000;font-family:'Liberation Sans',sans-serif;transform:scaleX(0.8950);transform-origin:0 0;">Programmable</div><div style="left:1195px;top:171px;width:47px;height:23px;background:#dedede;border:1px solid #b4b4b4"></div><svg style="left:1213.7px;top:175.5px" width="9.6" height="13" viewBox="0 0 12 16"><path d="M2.2 5 C2.2 2 4 1 6 1 C8.5 1 10 2.5 10 4.5 C10 6.5 8.5 7.2 7.3 8 C6.6 8.5 6.5 9 6.5 10" stroke="#5a5400" stroke-width="3.9" fill="none" stroke-linecap="round"/><path d="M2.2 5 C2.2 2 4 1 6 1 C8.5 1 10 2.5 10 4.5 C10 6.5 8.5 7.2 7.3 8 C6.6 8.5 6.5 9 6.5 10" stroke="#fff200" stroke-width="2.0" fill="none" stroke-linecap="round"/><rect x="4.3" y="11.6" width="4.2" height="3.8" fill="#fff200" stroke="#5a5400" stroke-width="1"/></svg><div style="left:1003px;top:195px;width:291px;height:20px;background:#fff;border:1px solid #b4b4b4"></div><div style="left:1022px;top:231px;width:253px;height:4px;background:#e7e7e7;border:1px solid #d6d6d6"></div><svg style="left:1019px;top:242px" width="259" height="9" viewBox="0 0 259 9"><line x1="3.5" y1="1" x2="3.5" y2="8" stroke="#cacaca" stroke-width="1"/><line x1="16.5" y1="1" x2="16.5" y2="5" stroke="#cacaca" stroke-width="1"/><line x1="28.5" y1="1" x2="28.5" y2="5" stroke="#cacaca" stroke-width="1"/><line x1="41.5" y1="1" x2="41.5" y2="5" stroke="#cacaca" stroke-width="1"/><line x1="54.5" y1="1" x2="54.5" y2="5" stroke="#cacaca" stroke-width="1"/><line x1="66.5" y1="1" x2="66.5" y2="5" stroke="#cacaca" stroke-width="1"/><line x1="79.5" y1="1" x2="79.5" y2="5" stroke="#cacaca" stroke-width="1"/><line x1="92.5" y1="1" x2="92.5" y2="5" stroke="#cacaca" stroke-width="1"/><line x1="104.5" y1="1" x2="104.5" y2="5" stroke="#cacaca" stroke-width="1"/><line x1="117.5" y1="1" x2="117.5" y2="5" stroke="#cacaca" stroke-width="1"/><line x1="130.5" y1="1" x2="130.5" y2="8" stroke="#cacaca" stroke-width="1"/><line x1="142.5" y1="1" x2="142.5" y2="5" stroke="#cacaca" stroke-width="1"/><line x1="155.5" y1="1" x2="155.5" y2="5" stroke="#cacaca" stroke-width="1"/><line x1="167.5" y1="1" x2="167.5" y2="5" stroke="#cacaca" stroke-width="1"/><line x1="180.5" y1="1" x2="180.5" y2="5" stroke="#cacaca" stroke-width="1"/><line x1="193.5" y1="1" x2="193.5" y2="5" stroke="#cacaca" stroke-width="1"/><line x1="205.5" y1="1" x2="205.5" y2="5" stroke="#cacaca" stroke-width="1"/><line x1="218.5" y1="1" x2="218.5" y2="5" stroke="#cacaca" stroke-width="1"/><line x1="231.5" y1="1" x2="231.5" y2="5" stroke="#cacaca" stroke-width="1"/><line x1="243.5" y1="1" x2="243.5" y2="5" stroke="#cacaca" stroke-width="1"/><line x1="256.5" y1="1" x2="256.5" y2="8" stroke="#cacaca" stroke-width="1"/></svg><svg style="left:1019.0px;top:224px" width="11" height="20" viewBox="0 0 11 20"><path d="M0 0 H11 V13 L5.5 19 L0 13 Z" fill="#0a6fd6"/></svg><div class="t" style="left:1012.50px;top:252.57px;font-size:11.5px;color:#000;font-family:'Liberation Sans',sans-serif;transform:scaleX(0.9708);transform-origin:0 0;">Top</div><div class="t" style="left:1133.00px;top:252.57px;font-size:11.5px;color:#000;font-family:'Liberation Sans',sans-serif;transform:scaleX(0.8856);transform-origin:0 0;">Middle</div><div class="t" style="left:1256.00px;top:252.57px;font-size:11.5px;color:#000;font-family:'Liberation Sans',sans-serif;transform:scaleX(0.9415);transform-origin:0 0;">Bottom</div><div style="left:1022px;top:281px;width:253px;height:4px;background:#e7e7e7;border:1px solid #d6d6d6"></div><svg style="left:1019px;top:292px" width="259" height="9" viewBox="0 0 259 9"><line x1="3.5" y1="1" x2="3.5" y2="8" stroke="#cacaca" stroke-width="1"/><line x1="16.5" y1="1" x2="16.5" y2="5" stroke="#cacaca" stroke-width="1"/><line x1="28.5" y1="1" x2="28.5" y2="5" stroke="#cacaca" stroke-width="1"/><line x1="41.5" y1="1" x2="41.5" y2="5" stroke="#cacaca" stroke-width="1"/><line x1="54.5" y1="1" x2="54.5" y2="5" stroke="#cacaca" stroke-width="1"/><line x1="66.5" y1="1" x2="66.5" y2="5" stroke="#cacaca" stroke-width="1"/><line x1="79.5" y1="1" x2="79.5" y2="5" stroke="#cacaca" stroke-width="1"/><line x1="92.5" y1="1" x2="92.5" y2="5" stroke="#cacaca" stroke-width="1"/><line x1="104.5" y1="1" x2="104.5" y2="5" stroke="#cacaca" stroke-width="1"/><line x1="117.5" y1="1" x2="117.5" y2="5" stroke="#cacaca" stroke-width="1"/><line x1="130.5" y1="1" x2="130.5" y2="8" stroke="#cacaca" stroke-width="1"/><line x1="142.5" y1="1" x2="142.5" y2="5" stroke="#cacaca" stroke-width="1"/><line x1="155.5" y1="1" x2="155.5" y2="5" stroke="#cacaca" stroke-width="1"/><line x1="167.5" y1="1" x2="167.5" y2="5" stroke="#cacaca" stroke-width="1"/><line x1="180.5" y1="1" x2="180.5" y2="5" stroke="#cacaca" stroke-width="1"/><line x1="193.5" y1="1" x2="193.5" y2="5" stroke="#cacaca" stroke-width="1"/><line x1="205.5" y1="1" x2="205.5" y2="5" stroke="#cacaca" stroke-width="1"/><line x1="218.5" y1="1" x2="218.5" y2="5" stroke="#cacaca" stroke-width="1"/><line x1="231.5" y1="1" x2="231.5" y2="5" stroke="#cacaca" stroke-width="1"/><line x1="243.5" y1="1" x2="243.5" y2="5" stroke="#cacaca" stroke-width="1"/><line x1="256.5" y1="1" x2="256.5" y2="8" stroke="#cacaca" stroke-width="1"/></svg><svg style="left:1145.0px;top:274px" width="11" height="20" viewBox="0 0 11 20"><path d="M0 0 H11 V13 L5.5 19 L0 13 Z" fill="#0a6fd6"/></svg><div class="t" style="left:1012.00px;top:302.57px;font-size:11.5px;color:#000;font-family:'Liberation Sans',sans-serif;transform:scaleX(1.0270);transform-origin:0 0;">Left</div><div class="t" style="left:1132.30px;top:302.57px;font-size:11.5px;color:#000;font-family:'Liberation Sans',sans-serif;transform:scaleX(0.9387);transform-origin:0 0;">Center</div><div class="t" style="left:1261.00px;top:302.57px;font-size:11.5px;color:#000;font-family:'Liberation Sans',sans-serif;transform:scaleX(0.9611);transform-origin:0 0;">Right</div><div style="left:1301px;top:160px;width:297px;height:158px;border:1px solid #7f9ae6"></div><div style="left:1420px;top:159px;width:57px;height:3px;background:#f0f0f0"></div><div class="t" style="left:1424.50px;top:154.72px;font-size:12.5px;color:#333;font-family:'Liberation Sans',sans-serif;font-weight:bold;transform:scaleX(1.0691);transform-origin:0 0;">Subtitle</div><svg style="left:1307.4px;top:175.3px" width="14" height="14" viewBox="0 0 14 14"><circle cx="7" cy="7" r="6" fill="#fff" stroke="#333" stroke-width="1"/></svg><div class="t" style="left:1324.30px;top:177.07px;font-size:11.5px;color:#000;font-family:'Liberation Sans',sans-serif;transform:scaleX(0.8985);transform-origin:0 0;">None</div><svg style="left:1358.5px;top:175.3px" width="14" height="14" viewBox="0 0 14 14"><circle cx="7" cy="7" r="6" fill="#fff" stroke="#333" stroke-width="1"/><circle cx="7" cy="7" r="3.2" fill="#333"/></svg><div class="t" style="left:1375.60px;top:177.07px;font-size:11.5px;color:#000;font-family:'Liberation Sans',sans-serif;transform:scaleX(1.0384);transform-origin:0 0;">Text</div><svg style="left:1405.3px;top:175.3px" width="14" height="14" viewBox="0 0 14 14"><circle cx="7" cy="7" r="6" fill="#fff" stroke="#333" stroke-width="1"/></svg><div class="t" style="left:1422.30px;top:177.07px;font-size:11.5px;color:#000;font-family:'Liberation Sans',sans-serif;transform:scaleX(0.8950);transform-origin:0 0;">Programmable</div><div style="left:1496px;top:171px;width:47px;height:23px;background:#dedede;border:1px solid #b4b4b4"></div><svg style="left:1514.7px;top:175.5px" width="9.6" height="13" viewBox="0 0 12 16"><path d="M2.2 5 C2.2 2 4 1 6 1 C8.5 1 10 2.5 10 4.5 C10 6.5 8.5 7.2 7.3 8 C6.6 8.5 6.5 9 6.5 10" stroke="#5a5400" stroke-width="3.9" fill="none" stroke-linecap="round"/><path d="M2.2 5 C2.2 2 4 1 6 1 C8.5 1 10 2.5 10 4.5 C10 6.5 8.5 7.2 7.3 8 C6.6 8.5 6.5 9 6.5 10" stroke="#fff200" stroke-width="2.0" fill="none" stroke-linecap="round"/><rect x="4.3" y="11.6" width="4.2" height="3.8" fill="#fff200" stroke="#5a5400" stroke-width="1"/></svg><div style="left:1304px;top:195px;width:291px;height:20px;background:#fff;border:1px solid #b4b4b4"></div><div style="left:1323px;top:231px;width:253px;height:4px;background:#e7e7e7;border:1px solid #d6d6d6"></div><svg style="left:1320px;top:242px" width="259" height="9" viewBox="0 0 259 9"><line x1="3.5" y1="1" x2="3.5" y2="8" stroke="#cacaca" stroke-width="1"/><line x1="16.5" y1="1" x2="16.5" y2="5" stroke="#cacaca" stroke-width="1"/><line x1="28.5" y1="1" x2="28.5" y2="5" stroke="#cacaca" stroke-width="1"/><line x1="41.5" y1="1" x2="41.5" y2="5" stroke="#cacaca" stroke-width="1"/><line x1="54.5" y1="1" x2="54.5" y2="5" stroke="#cacaca" stroke-width="1"/><line x1="66.5" y1="1" x2="66.5" y2="5" stroke="#cacaca" stroke-width="1"/><line x1="79.5" y1="1" x2="79.5" y2="5" stroke="#cacaca" stroke-width="1"/><line x1="92.5" y1="1" x2="92.5" y2="5" stroke="#cacaca" stroke-width="1"/><line x1="104.5" y1="1" x2="104.5" y2="5" stroke="#cacaca" stroke-width="1"/><line x1="117.5" y1="1" x2="117.5" y2="5" stroke="#cacaca" stroke-width="1"/><line x1="130.5" y1="1" x2="130.5" y2="8" stroke="#cacaca" stroke-width="1"/><line x1="142.5" y1="1" x2="142.5" y2="5" stroke="#cacaca" stroke-width="1"/><line x1="155.5" y1="1" x2="155.5" y2="5" stroke="#cacaca" stroke-width="1"/><line x1="167.5" y1="1" x2="167.5" y2="5" stroke="#cacaca" stroke-width="1"/><line x1="180.5" y1="1" x2="180.5" y2="5" stroke="#cacaca" stroke-width="1"/><line x1="193.5" y1="1" x2="193.5" y2="5" stroke="#cacaca" stroke-width="1"/><line x1="205.5" y1="1" x2="205.5" y2="5" stroke="#cacaca" stroke-width="1"/><line x1="218.5" y1="1" x2="218.5" y2="5" stroke="#cacaca" stroke-width="1"/><line x1="231.5" y1="1" x2="231.5" y2="5" stroke="#cacaca" stroke-width="1"/><line x1="243.5" y1="1" x2="243.5" y2="5" stroke="#cacaca" stroke-width="1"/><line x1="256.5" y1="1" x2="256.5" y2="8" stroke="#cacaca" stroke-width="1"/></svg><svg style="left:1332.6px;top:224px" width="11" height="20" viewBox="0 0 11 20"><path d="M0 0 H11 V13 L5.5 19 L0 13 Z" fill="#0a6fd6"/></svg><div class="t" style="left:1313.50px;top:252.57px;font-size:11.5px;color:#000;font-family:'Liberation Sans',sans-serif;transform:scaleX(0.9708);transform-origin:0 0;">Top</div><div class="t" style="left:1434.00px;top:252.57px;font-size:11.5px;color:#000;font-family:'Liberation Sans',sans-serif;transform:scaleX(0.8856);transform-origin:0 0;">Middle</div><div class="t" style="left:1557.00px;top:252.57px;font-size:11.5px;color:#000;font-family:'Liberation Sans',sans-serif;transform:scaleX(0.9415);transform-origin:0 0;">Bottom</div><div style="left:1323px;top:281px;width:253px;height:4px;background:#e7e7e7;border:1px solid #d6d6d6"></div><svg style="left:1320px;top:292px" width="259" height="9" viewBox="0 0 259 9"><line x1="3.5" y1="1" x2="3.5" y2="8" stroke="#cacaca" stroke-width="1"/><line x1="16.5" y1="1" x2="16.5" y2="5" stroke="#cacaca" stroke-width="1"/><line x1="28.5" y1="1" x2="28.5" y2="5" stroke="#cacaca" stroke-width="1"/><line x1="41.5" y1="1" x2="41.5" y2="5" stroke="#cacaca" stroke-width="1"/><line x1="54.5" y1="1" x2="54.5" y2="5" stroke="#cacaca" stroke-width="1"/><line x1="66.5" y1="1" x2="66.5" y2="5" stroke="#cacaca" stroke-width="1"/><line x1="79.5" y1="1" x2="79.5" y2="5" stroke="#cacaca" stroke-width="1"/><line x1="92.5" y1="1" x2="92.5" y2="5" stroke="#cacaca" stroke-width="1"/><line x1="104.5" y1="1" x2="104.5" y2="5" stroke="#cacaca" stroke-width="1"/><line x1="117.5" y1="1" x2="117.5" y2="5" stroke="#cacaca" stroke-width="1"/><line x1="130.5" y1="1" x2="130.5" y2="8" stroke="#cacaca" stroke-width="1"/><line x1="142.5" y1="1" x2="142.5" y2="5" stroke="#cacaca" stroke-width="1"/><line x1="155.5" y1="1" x2="155.5" y2="5" stroke="#cacaca" stroke-width="1"/><line x1="167.5" y1="1" x2="167.5" y2="5" stroke="#cacaca" stroke-width="1"/><line x1="180.5" y1="1" x2="180.5" y2="5" stroke="#cacaca" stroke-width="1"/><line x1="193.5" y1="1" x2="193.5" y2="5" stroke="#cacaca" stroke-width="1"/><line x1="205.5" y1="1" x2="205.5" y2="5" stroke="#cacaca" stroke-width="1"/><line x1="218.5" y1="1" x2="218.5" y2="5" stroke="#cacaca" stroke-width="1"/><line x1="231.5" y1="1" x2="231.5" y2="5" stroke="#cacaca" stroke-width="1"/><line x1="243.5" y1="1" x2="243.5" y2="5" stroke="#cacaca" stroke-width="1"/><line x1="256.5" y1="1" x2="256.5" y2="8" stroke="#cacaca" stroke-width="1"/></svg><svg style="left:1446.0px;top:274px" width="11" height="20" viewBox="0 0 11 20"><path d="M0 0 H11 V13 L5.5 19 L0 13 Z" fill="#0a6fd6"/></svg><div class="t" style="left:1313.00px;top:302.57px;font-size:11.5px;color:#000;font-family:'Liberation Sans',sans-serif;transform:scaleX(1.0270);transform-origin:0 0;">Left</div><div class="t" style="left:1433.30px;top:302.57px;font-size:11.5px;color:#000;font-family:'Liberation Sans',sans-serif;transform:scaleX(0.9387);transform-origin:0 0;">Center</div><div class="t" style="left:1562.00px;top:302.57px;font-size:11.5px;color:#000;font-family:'Liberation Sans',sans-serif;transform:scaleX(0.9611);transform-origin:0 0;">Right</div><div style="left:1602px;top:160px;width:297px;height:158px;border:1px solid #7f9ae6"></div><div style="left:1724px;top:159px;width:52px;height:3px;background:#f0f0f0"></div><div class="t" style="left:1728.00px;top:154.72px;font-size:12.5px;color:#333;font-family:'Liberation Sans',sans-serif;font-weight:bold;transform:scaleX(0.9899);transform-origin:0 0;">Legend</div><div class="t" style="left:1605.00px;top:176.07px;font-size:11.5px;color:#000;font-family:'Liberation Sans',sans-serif;transform:scaleX(0.9039);transform-origin:0 0;">Align:</div><svg style="left:1637.3px;top:174.4px" width="14" height="14" viewBox="0 0 14 14"><circle cx="7" cy="7" r="6" fill="#fff" stroke="#333" stroke-width="1"/></svg><div class="t" style="left:1654.50px;top:176.07px;font-size:11.5px;color:#000;font-family:'Liberation Sans',sans-serif;transform:scaleX(0.9645);transform-origin:0 0;">Left</div><svg style="left:1684.2px;top:174.4px" width="14" height="14" viewBox="0 0 14 14"><circle cx="7" cy="7" r="6" fill="#fff" stroke="#333" stroke-width="1"/><circle cx="7" cy="7" r="3.2" fill="#333"/></svg><div class="t" style="left:1701.70px;top:176.07px;font-size:11.5px;color:#000;font-family:'Liberation Sans',sans-serif;transform:scaleX(0.9271);transform-origin:0 0;">Center</div><svg style="left:1745.1px;top:174.4px" width="14" height="14" viewBox="0 0 14 14"><circle cx="7" cy="7" r="6" fill="#fff" stroke="#333" stroke-width="1"/></svg><div class="t" style="left:1762.60px;top:176.07px;font-size:11.5px;color:#000;font-family:'Liberation Sans',sans-serif;transform:scaleX(0.9499);transform-origin:0 0;">Right</div><div style="left:1875px;top:172px;width:19px;height:19px;background:#e3e3e3;border:1px solid #b8b8b8"></div><svg style="left:1875px;top:172px" width="19" height="19" viewBox="0 0 19 19"><path d="M6 6.5 L15.6 15" stroke="#2a2600" stroke-width="5.4" stroke-linecap="round"/><circle cx="5.6" cy="5.6" r="4.6" fill="#2a2600"/><path d="M6 6.5 L15.6 15" stroke="#f4ee00" stroke-width="3.4" stroke-linecap="round"/><circle cx="5.6" cy="5.6" r="3.5" fill="#f4ee00"/><circle cx="4.8" cy="4.8" r="1.5" fill="#7a5aa8"/><path d="M0.5 0.5 L4 0.5 L2.6 3.2 Z" fill="#d8e4d0"/></svg><div class="t" style="left:1731.95px;top:200.27px;font-size:11.5px;color:#000;font-family:'Liberation Sans',sans-serif;transform:scaleX(0.9166);transform-origin:0 0;">Position</div><div style="left:1624px;top:231px;width:253px;height:4px;background:#e7e7e7;border:1px solid #d6d6d6"></div><svg style="left:1621px;top:242px" width="259" height="9" viewBox="0 0 259 9"><line x1="3.5" y1="1" x2="3.5" y2="8" stroke="#cacaca" stroke-width="1"/><line x1="16.5" y1="1" x2="16.5" y2="5" stroke="#cacaca" stroke-width="1"/><line x1="28.5" y1="1" x2="28.5" y2="5" stroke="#cacaca" stroke-width="1"/><line x1="41.5" y1="1" x2="41.5" y2="5" stroke="#cacaca" stroke-width="1"/><line x1="54.5" y1="1" x2="54.5" y2="5" stroke="#cacaca" stroke-width="1"/><line x1="66.5" y1="1" x2="66.5" y2="5" stroke="#cacaca" stroke-width="1"/><line x1="79.5" y1="1" x2="79.5" y2="5" stroke="#cacaca" stroke-width="1"/><line x1="92.5" y1="1" x2="92.5" y2="5" stroke="#cacaca" stroke-width="1"/><line x1="104.5" y1="1" x2="104.5" y2="5" stroke="#cacaca" stroke-width="1"/><line x1="117.5" y1="1" x2="117.5" y2="5" stroke="#cacaca" stroke-width="1"/><line x1="130.5" y1="1" x2="130.5" y2="8" stroke="#cacaca" stroke-width="1"/><line x1="142.5" y1="1" x2="142.5" y2="5" stroke="#cacaca" stroke-width="1"/><line x1="155.5" y1="1" x2="155.5" y2="5" stroke="#cacaca" stroke-width="1"/><line x1="167.5" y1="1" x2="167.5" y2="5" stroke="#cacaca" stroke-width="1"/><line x1="180.5" y1="1" x2="180.5" y2="5" stroke="#cacaca" stroke-width="1"/><line x1="193.5" y1="1" x2="193.5" y2="5" stroke="#cacaca" stroke-width="1"/><line x1="205.5" y1="1" x2="205.5" y2="5" stroke="#cacaca" stroke-width="1"/><line x1="218.5" y1="1" x2="218.5" y2="5" stroke="#cacaca" stroke-width="1"/><line x1="231.5" y1="1" x2="231.5" y2="5" stroke="#cacaca" stroke-width="1"/><line x1="243.5" y1="1" x2="243.5" y2="5" stroke="#cacaca" stroke-width="1"/><line x1="256.5" y1="1" x2="256.5" y2="8" stroke="#cacaca" stroke-width="1"/></svg><svg style="left:1627.8px;top:224px" width="11" height="20" viewBox="0 0 11 20"><path d="M0 0 H11 V13 L5.5 19 L0 13 Z" fill="#0a6fd6"/></svg><div class="t" style="left:1614.50px;top:252.57px;font-size:11.5px;color:#000;font-family:'Liberation Sans',sans-serif;transform:scaleX(0.9708);transform-origin:0 0;">Top</div><div class="t" style="left:1735.00px;top:252.57px;font-size:11.5px;color:#000;font-family:'Liberation Sans',sans-serif;transform:scaleX(0.8856);transform-origin:0 0;">Middle</div><div class="t" style="left:1858.00px;top:252.57px;font-size:11.5px;color:#000;font-family:'Liberation Sans',sans-serif;transform:scaleX(0.9415);transform-origin:0 0;">Bottom</div><div style="left:1624px;top:281px;width:253px;height:4px;background:#e7e7e7;border:1px solid #d6d6d6"></div><svg style="left:1621px;top:292px" width="259" height="9" viewBox="0 0 259 9"><line x1="3.5" y1="1" x2="3.5" y2="8" stroke="#cacaca" stroke-width="1"/><line x1="16.5" y1="1" x2="16.5" y2="5" stroke="#cacaca" stroke-width="1"/><line x1="28.5" y1="1" x2="28.5" y2="5" stroke="#cacaca" stroke-width="1"/><line x1="41.5" y1="1" x2="41.5" y2="5" stroke="#cacaca" stroke-width="1"/><line x1="54.5" y1="1" x2="54.5" y2="5" stroke="#cacaca" stroke-width="1"/><line x1="66.5" y1="1" x2="66.5" y2="5" stroke="#cacaca" stroke-width="1"/><line x1="79.5" y1="1" x2="79.5" y2="5" stroke="#cacaca" stroke-width="1"/><line x1="92.5" y1="1" x2="92.5" y2="5" stroke="#cacaca" stroke-width="1"/><line x1="104.5" y1="1" x2="104.5" y2="5" stroke="#cacaca" stroke-width="1"/><line x1="117.5" y1="1" x2="117.5" y2="5" stroke="#cacaca" stroke-width="1"/><line x1="130.5" y1="1" x2="130.5" y2="8" stroke="#cacaca" stroke-width="1"/><line x1="142.5" y1="1" x2="142.5" y2="5" stroke="#cacaca" stroke-width="1"/><line x1="155.5" y1="1" x2="155.5" y2="5" stroke="#cacaca" stroke-width="1"/><line x1="167.5" y1="1" x2="167.5" y2="5" stroke="#cacaca" stroke-width="1"/><line x1="180.5" y1="1" x2="180.5" y2="5" stroke="#cacaca" stroke-width="1"/><line x1="193.5" y1="1" x2="193.5" y2="5" stroke="#cacaca" stroke-width="1"/><line x1="205.5" y1="1" x2="205.5" y2="5" stroke="#cacaca" stroke-width="1"/><line x1="218.5" y1="1" x2="218.5" y2="5" stroke="#cacaca" stroke-width="1"/><line x1="231.5" y1="1" x2="231.5" y2="5" stroke="#cacaca" stroke-width="1"/><line x1="243.5" y1="1" x2="243.5" y2="5" stroke="#cacaca" stroke-width="1"/><line x1="256.5" y1="1" x2="256.5" y2="8" stroke="#cacaca" stroke-width="1"/></svg><svg style="left:1747.0px;top:274px" width="11" height="20" viewBox="0 0 11 20"><path d="M0 0 H11 V13 L5.5 19 L0 13 Z" fill="#0a6fd6"/></svg><div class="t" style="left:1614.00px;top:302.57px;font-size:11.5px;color:#000;font-family:'Liberation Sans',sans-serif;transform:scaleX(1.0270);transform-origin:0 0;">Left</div><div class="t" style="left:1734.30px;top:302.57px;font-size:11.5px;color:#000;font-family:'Liberation Sans',sans-serif;transform:scaleX(0.9387);transform-origin:0 0;">Center</div><div class="t" style="left:1863.00px;top:302.57px;font-size:11.5px;color:#000;font-family:'Liberation Sans',sans-serif;transform:scaleX(0.9611);transform-origin:0 0;">Right</div><div style="left:1000px;top:333px;width:356px;height:63px;border:1px solid #7f9ae6"></div><div style="left:1137px;top:332px;width:82px;height:3px;background:#f0f0f0"></div><div class="t" style="left:1140.80px;top:327.72px;font-size:12.5px;color:#333;font-family:'Liberation Sans',sans-serif;font-weight:bold;transform:scaleX(0.9863);transform-origin:0 0;">X-Axis Label</div><svg style="left:1008.2px;top:348.2px" width="14" height="14" viewBox="0 0 14 14"><circle cx="7" cy="7" r="6" fill="#fff" stroke="#333" stroke-width="1"/></svg><div class="t" style="left:1025.40px;top:349.87px;font-size:11.5px;color:#000;font-family:'Liberation Sans',sans-serif;transform:scaleX(0.8985);transform-origin:0 0;">None</div><svg style="left:1061.1px;top:348.2px" width="14" height="14" viewBox="0 0 14 14"><circle cx="7" cy="7" r="6" fill="#fff" stroke="#333" stroke-width="1"/><circle cx="7" cy="7" r="3.2" fill="#333"/></svg><div class="t" style="left:1078.70px;top:349.87px;font-size:11.5px;color:#000;font-family:'Liberation Sans',sans-serif;transform:scaleX(0.8808);transform-origin:0 0;">Column Label</div><svg style="left:1152.1px;top:348.2px" width="14" height="14" viewBox="0 0 14 14"><circle cx="7" cy="7" r="6" fill="#fff" stroke="#333" stroke-width="1"/></svg><div class="t" style="left:1169.50px;top:349.87px;font-size:11.5px;color:#000;font-family:'Liberation Sans',sans-serif;transform:scaleX(0.8978);transform-origin:0 0;">Custom Label</div><div style="left:1331px;top:346px;width:19px;height:19px;background:#e3e3e3;border:1px solid #b8b8b8"></div><svg style="left:1331px;top:346px" width="19" height="19" viewBox="0 0 19 19"><path d="M6 6.5 L15.6 15" stroke="#2a2600" stroke-width="5.4" stroke-linecap="round"/><circle cx="5.6" cy="5.6" r="4.6" fill="#2a2600"/><path d="M6 6.5 L15.6 15" stroke="#f4ee00" stroke-width="3.4" stroke-linecap="round"/><circle cx="5.6" cy="5.6" r="3.5" fill="#f4ee00"/><circle cx="4.8" cy="4.8" r="1.5" fill="#7a5aa8"/><path d="M0.5 0.5 L4 0.5 L2.6 3.2 Z" fill="#d8e4d0"/></svg><div style="left:1003px;top:369px;width:351px;height:24px;background:#fff;border:1px solid #b4b4b4"></div><div style="left:1360px;top:333px;width:356px;height:63px;border:1px solid #7f9ae6"></div><div style="left:1496px;top:332px;width:82px;height:3px;background:#f0f0f0"></div><div class="t" style="left:1500.40px;top:327.72px;font-size:12.5px;color:#333;font-family:'Liberation Sans',sans-serif;font-weight:bold;">Y-Axis Label</div><svg style="left:1366.2px;top:348.5px" width="14" height="14" viewBox="0 0 14 14"><circle cx="7" cy="7" r="6" fill="#fff" stroke="#333" stroke-width="1"/></svg><div class="t" style="left:1383.30px;top:349.87px;font-size:11.5px;color:#000;font-family:'Liberation Sans',sans-serif;transform:scaleX(0.8985);transform-origin:0 0;">None</div><svg style="left:1419.3px;top:348.5px" width="14" height="14" viewBox="0 0 14 14"><circle cx="7" cy="7" r="6" fill="#fff" stroke="#333" stroke-width="1"/><circle cx="7" cy="7" r="3.2" fill="#333"/></svg><div class="t" style="left:1436.70px;top:349.87px;font-size:11.5px;color:#000;font-family:'Liberation Sans',sans-serif;transform:scaleX(0.8808);transform-origin:0 0;">Column Label</div><svg style="left:1510.5px;top:348.5px" width="14" height="14" viewBox="0 0 14 14"><circle cx="7" cy="7" r="6" fill="#fff" stroke="#333" stroke-width="1"/></svg><div class="t" style="left:1527.60px;top:349.87px;font-size:11.5px;color:#000;font-family:'Liberation Sans',sans-serif;transform:scaleX(0.8978);transform-origin:0 0;">Custom Label</div><div style="left:1691px;top:346px;width:19px;height:19px;background:#e3e3e3;border:1px solid #b8b8b8"></div><svg style="left:1691px;top:346px" width="19" height="19" viewBox="0 0 19 19"><path d="M6 6.5 L15.6 15" stroke="#2a2600" stroke-width="5.4" stroke-linecap="round"/><circle cx="5.6" cy="5.6" r="4.6" fill="#2a2600"/><path d="M6 6.5 L15.6 15" stroke="#f4ee00" stroke-width="3.4" stroke-linecap="round"/><circle cx="5.6" cy="5.6" r="3.5" fill="#f4ee00"/><circle cx="4.8" cy="4.8" r="1.5" fill="#7a5aa8"/><path d="M0.5 0.5 L4 0.5 L2.6 3.2 Z" fill="#d8e4d0"/></svg><div style="left:1363px;top:369px;width:350px;height:24px;background:#fff;border:1px solid #b4b4b4"></div><div style="left:1720px;top:333px;width:180px;height:63px;border:1px solid #7f9ae6"></div><div style="left:1749px;top:332px;width:121px;height:3px;background:#f0f0f0"></div><div class="t" style="left:1753.00px;top:327.72px;font-size:12.5px;color:#333;font-family:'Liberation Sans',sans-serif;font-weight:bold;transform:scaleX(1.0103);transform-origin:0 0;">Trim Data Samples</div><div class="t" style="left:1746.00px;top:349.57px;font-size:11.5px;color:#000;font-family:'Liberation Sans',sans-serif;transform:scaleX(0.9458);transform-origin:0 0;">Head</div><div class="t" style="left:1755.00px;top:374.57px;font-size:11.5px;color:#000;font-family:'Liberation Sans',sans-serif;transform:scaleX(0.9852);transform-origin:0 0;">Tail</div><div style="left:1773px;top:344px;width:124px;height:25px;background:#fff;border:1px solid #a9a9a9"></div><svg style="left:1880px;top:346px" width="15" height="21" viewBox="0 0 15 21"><rect x="0.5" y="0.5" width="14" height="10.0" fill="#ececec" stroke="#cfcfcf"/><rect x="0.5" y="10.5" width="14" height="10.0" fill="#ececec" stroke="#cfcfcf"/><line x1="0" y1="10.5" x2="15" y2="10.5" stroke="#b4b4b4"/><path d="M4.5 8.2 L7.5 5.2 L10.5 8.2 Z" fill="#000"/><path d="M4.5 14.2 L7.5 17.2 L10.5 14.2 Z" fill="#000"/></svg><div class="t" style="left:1871.05px;top:351.07px;font-size:11.5px;color:#000;font-family:'Liberation Sans',sans-serif;transform:scaleX(0.9300);transform-origin:0 0;">0</div><div style="left:1773px;top:368px;width:124px;height:25px;background:#fff;border:1px solid #a9a9a9"></div><svg style="left:1880px;top:370px" width="15" height="21" viewBox="0 0 15 21"><rect x="0.5" y="0.5" width="14" height="10.0" fill="#ececec" stroke="#cfcfcf"/><rect x="0.5" y="10.5" width="14" height="10.0" fill="#ececec" stroke="#cfcfcf"/><line x1="0" y1="10.5" x2="15" y2="10.5" stroke="#b4b4b4"/><path d="M4.5 8.2 L7.5 5.2 L10.5 8.2 Z" fill="#000"/><path d="M4.5 14.2 L7.5 17.2 L10.5 14.2 Z" fill="#000"/></svg><div class="t" style="left:1871.05px;top:375.07px;font-size:11.5px;color:#000;font-family:'Liberation Sans',sans-serif;transform:scaleX(0.9300);transform-origin:0 0;">0</div><div style="left:1000px;top:411px;width:448px;height:90px;border:1px solid #7f9ae6"></div><div style="left:1177px;top:410px;width:92px;height:3px;background:#f0f0f0"></div><div class="t" style="left:1181.40px;top:405.72px;font-size:12.5px;color:#333;font-family:'Liberation Sans',sans-serif;font-weight:bold;transform:scaleX(0.9696);transform-origin:0 0;">X-Axis Scaling</div><svg style="left:1006.4px;top:425.7px" width="14" height="14" viewBox="0 0 14 14"><circle cx="7" cy="7" r="6" fill="#fff" stroke="#333" stroke-width="1"/><circle cx="7" cy="7" r="3.2" fill="#333"/></svg><div class="t" style="left:1023.70px;top:427.07px;font-size:11.5px;color:#000;font-family:'Liberation Sans',sans-serif;transform:scaleX(0.9356);transform-origin:0 0;">Auto X-range</div><svg style="left:1126.3px;top:425.7px" width="14" height="14" viewBox="0 0 14 14"><circle cx="7" cy="7" r="6" fill="#fff" stroke="#333" stroke-width="1"/></svg><div class="t" style="left:1143.30px;top:427.07px;font-size:11.5px;color:#000;font-family:'Liberation Sans',sans-serif;transform:scaleX(0.9133);transform-origin:0 0;">First X-value as min</div><svg style="left:1311.4px;top:425.7px" width="14" height="14" viewBox="0 0 14 14"><circle cx="7" cy="7" r="6" fill="#fff" stroke="#333" stroke-width="1"/></svg><div class="t" style="left:1328.70px;top:427.07px;font-size:11.5px;color:#000;font-family:'Liberation Sans',sans-serif;transform:scaleX(0.9149);transform-origin:0 0;">Custom X-range</div><div style="left:1034px;top:445px;width:47px;height:23px;background:#dedede;border:1px solid #b4b4b4"></div><svg style="left:1037.5px;top:445.2px" width="39" height="22" viewBox="0 0 39 22"><defs><linearGradient id="ag" x1="0" y1="0" x2="1" y2="1"><stop offset="0" stop-color="#0a3cb8"/><stop offset="0.55" stop-color="#2a7ae0"/><stop offset="1" stop-color="#5ab4ff"/></linearGradient></defs><path d="M0.8 0.8 H10 C10.6 4.6 12 5.8 15 5.8 H25.2 V0.8 L37.4 10.5 L25.2 20.2 V15.2 H14 C6 15.2 0.8 9.5 0.8 0.8 Z" fill="#eaf4ff" stroke="#0a0f55" stroke-width="1.9" stroke-linejoin="round"/><path d="M3.5 3 C4.5 9 8 10.5 14 10.5 H27.5 V5.6 L34 10.5 L27.5 15.4 V12.8" fill="none" stroke="url(#ag)" stroke-width="0"/><path d="M3.6 3.3 H7.8 C8.6 7.6 11 8.6 14.5 8.6 H27 V5 L34.3 10.5 L27 16 V12.8 H14.2 C8 12.8 3.6 9 3.6 3.3 Z" fill="url(#ag)"/></svg><div class="t" style="left:1117.00px;top:452.77px;font-size:11.5px;color:#000;font-family:'Liberation Sans',sans-serif;transform:scaleX(0.9388);transform-origin:0 0;">X-width</div><div style="left:1154px;top:446px;width:119px;height:25px;background:#fff;border:1px solid #a9a9a9"></div><svg style="left:1256px;top:448px" width="15" height="21" viewBox="0 0 15 21"><rect x="0.5" y="0.5" width="14" height="10.0" fill="#ececec" stroke="#cfcfcf"/><rect x="0.5" y="10.5" width="14" height="10.0" fill="#ececec" stroke="#cfcfcf"/><line x1="0" y1="10.5" x2="15" y2="10.5" stroke="#b4b4b4"/><path d="M4.5 8.2 L7.5 5.2 L10.5 8.2 Z" fill="#000"/><path d="M4.5 14.2 L7.5 17.2 L10.5 14.2 Z" fill="#000"/></svg><div class="t" style="left:1232.19px;top:453.07px;font-size:11.5px;color:#000;font-family:'Liberation Sans',sans-serif;transform:scaleX(0.9300);transform-origin:0 0;">0.19</div><div style="left:1165px;top:474px;width:85px;height:22px;background:#dedede;border:1px solid #b4b4b4"></div><svg style="left:1188px;top:474.6px" width="39" height="22" viewBox="0 0 39 22"><defs><linearGradient id="ag" x1="0" y1="0" x2="1" y2="1"><stop offset="0" stop-color="#0a3cb8"/><stop offset="0.55" stop-color="#2a7ae0"/><stop offset="1" stop-color="#5ab4ff"/></linearGradient></defs><path d="M0.8 0.8 H10 C10.6 4.6 12 5.8 15 5.8 H25.2 V0.8 L37.4 10.5 L25.2 20.2 V15.2 H14 C6 15.2 0.8 9.5 0.8 0.8 Z" fill="#eaf4ff" stroke="#0a0f55" stroke-width="1.9" stroke-linejoin="round"/><path d="M3.5 3 C4.5 9 8 10.5 14 10.5 H27.5 V5.6 L34 10.5 L27.5 15.4 V12.8" fill="none" stroke="url(#ag)" stroke-width="0"/><path d="M3.6 3.3 H7.8 C8.6 7.6 11 8.6 14.5 8.6 H27 V5 L34.3 10.5 L27 16 V12.8 H14.2 C8 12.8 3.6 9 3.6 3.3 Z" fill="url(#ag)"/></svg><div class="t" style="left:1294.00px;top:452.77px;font-size:11.5px;color:#000;font-family:'Liberation Sans',sans-serif;transform:scaleX(0.9330);transform-origin:0 0;">X-max</div><div style="left:1325px;top:446px;width:120px;height:25px;background:#fff;border:1px solid #a9a9a9"></div><svg style="left:1428px;top:448px" width="15" height="21" viewBox="0 0 15 21"><rect x="0.5" y="0.5" width="14" height="10.0" fill="#ececec" stroke="#cfcfcf"/><rect x="0.5" y="10.5" width="14" height="10.0" fill="#ececec" stroke="#cfcfcf"/><line x1="0" y1="10.5" x2="15" y2="10.5" stroke="#b4b4b4"/><path d="M4.5 8.2 L7.5 5.2 L10.5 8.2 Z" fill="#000"/><path d="M4.5 14.2 L7.5 17.2 L10.5 14.2 Z" fill="#000"/></svg><div class="t" style="left:1350.66px;top:453.07px;font-size:11.5px;color:#000;font-family:'Liberation Sans',sans-serif;transform:scaleX(0.9300);transform-origin:0 0;">2147483647.69</div><div class="t" style="left:1298.00px;top:479.57px;font-size:11.5px;color:#000;font-family:'Liberation Sans',sans-serif;transform:scaleX(0.8991);transform-origin:0 0;">X-min</div><div style="left:1325px;top:473px;width:120px;height:25px;background:#fff;border:1px solid #a9a9a9"></div><svg style="left:1428px;top:475px" width="15" height="21" viewBox="0 0 15 21"><rect x="0.5" y="0.5" width="14" height="10.0" fill="#ececec" stroke="#cfcfcf"/><rect x="0.5" y="10.5" width="14" height="10.0" fill="#ececec" stroke="#cfcfcf"/><line x1="0" y1="10.5" x2="15" y2="10.5" stroke="#b4b4b4"/><path d="M4.5 8.2 L7.5 5.2 L10.5 8.2 Z" fill="#000"/><path d="M4.5 14.2 L7.5 17.2 L10.5 14.2 Z" fill="#000"/></svg><div class="t" style="left:1356.60px;top:480.07px;font-size:11.5px;color:#000;font-family:'Liberation Sans',sans-serif;transform:scaleX(0.9300);transform-origin:0 0;">2147483647.5</div><div style="left:1004px;top:471px;width:88px;height:27px;border:1px solid #c6c6c6;box-shadow:inset 1px 1px 0 #fff, 1px 1px 0 #fff"></div><div class="t" style="left:1005.80px;top:479.57px;font-size:11.5px;color:#000;font-family:'Liberation Sans',sans-serif;transform:scaleX(0.9151);transform-origin:0 0;">X x 1E</div><div style="left:1038px;top:474px;width:51px;height:22px;background:#f4f4f4;border:1px solid #a9a9a9"></div><svg style="left:1072px;top:476px" width="15" height="18" viewBox="0 0 15 18"><rect x="0.5" y="0.5" width="14" height="8.5" fill="#ececec" stroke="#cfcfcf"/><rect x="0.5" y="9.0" width="14" height="8.5" fill="#ececec" stroke="#cfcfcf"/><line x1="0" y1="9.0" x2="15" y2="9.0" stroke="#b4b4b4"/><path d="M4.5 7.5 L7.5 4.5 L10.5 7.5 Z" fill="#9a9a9a"/><path d="M4.5 12.0 L7.5 15.0 L10.5 12.0 Z" fill="#9a9a9a"/></svg><div class="t" style="left:1062.55px;top:479.57px;font-size:11.5px;color:#8c8c8c;font-family:'Liberation Sans',sans-serif;transform:scaleX(0.9300);transform-origin:0 0;">0</div><div style="left:1452px;top:411px;width:287px;height:90px;border:1px solid #7f9ae6"></div><div style="left:1549px;top:410px;width:92px;height:3px;background:#f0f0f0"></div><div class="t" style="left:1553.00px;top:405.72px;font-size:12.5px;color:#333;font-family:'Liberation Sans',sans-serif;font-weight:bold;transform:scaleX(0.9751);transform-origin:0 0;">Y-Axis Scaling</div><svg style="left:1458.1px;top:425.7px" width="14" height="14" viewBox="0 0 14 14"><circle cx="7" cy="7" r="6" fill="#fff" stroke="#333" stroke-width="1"/></svg><div class="t" style="left:1475.70px;top:427.07px;font-size:11.5px;color:#000;font-family:'Liberation Sans',sans-serif;transform:scaleX(0.9534);transform-origin:0 0;">Auto Y-range</div><svg style="left:1592px;top:425.7px" width="14" height="14" viewBox="0 0 14 14"><circle cx="7" cy="7" r="6" fill="#fff" stroke="#333" stroke-width="1"/><circle cx="7" cy="7" r="3.2" fill="#333"/></svg><div class="t" style="left:1609.40px;top:427.07px;font-size:11.5px;color:#000;font-family:'Liberation Sans',sans-serif;transform:scaleX(0.9289);transform-origin:0 0;">Custom Y-range</div><div style="left:1487px;top:445px;width:46px;height:23px;background:#dedede;border:1px solid #b4b4b4"></div><svg style="left:1490.5px;top:445.2px" width="39" height="22" viewBox="0 0 39 22"><defs><linearGradient id="ag" x1="0" y1="0" x2="1" y2="1"><stop offset="0" stop-color="#0a3cb8"/><stop offset="0.55" stop-color="#2a7ae0"/><stop offset="1" stop-color="#5ab4ff"/></linearGradient></defs><path d="M0.8 0.8 H10 C10.6 4.6 12 5.8 15 5.8 H25.2 V0.8 L37.4 10.5 L25.2 20.2 V15.2 H14 C6 15.2 0.8 9.5 0.8 0.8 Z" fill="#eaf4ff" stroke="#0a0f55" stroke-width="1.9" stroke-linejoin="round"/><path d="M3.5 3 C4.5 9 8 10.5 14 10.5 H27.5 V5.6 L34 10.5 L27.5 15.4 V12.8" fill="none" stroke="url(#ag)" stroke-width="0"/><path d="M3.6 3.3 H7.8 C8.6 7.6 11 8.6 14.5 8.6 H27 V5 L34.3 10.5 L27 16 V12.8 H14.2 C8 12.8 3.6 9 3.6 3.3 Z" fill="url(#ag)"/></svg><div class="t" style="left:1565.50px;top:452.37px;font-size:11.5px;color:#000;font-family:'Liberation Sans',sans-serif;transform:scaleX(0.9326);transform-origin:0 0;">Y-max</div><div style="left:1596px;top:446px;width:140px;height:25px;background:#fff;border:1px solid #a9a9a9"></div><svg style="left:1719px;top:448px" width="15" height="21" viewBox="0 0 15 21"><rect x="0.5" y="0.5" width="14" height="10.0" fill="#ececec" stroke="#cfcfcf"/><rect x="0.5" y="10.5" width="14" height="10.0" fill="#ececec" stroke="#cfcfcf"/><line x1="0" y1="10.5" x2="15" y2="10.5" stroke="#b4b4b4"/><path d="M4.5 8.2 L7.5 5.2 L10.5 8.2 Z" fill="#000"/><path d="M4.5 14.2 L7.5 17.2 L10.5 14.2 Z" fill="#000"/></svg><div class="t" style="left:1703.60px;top:453.07px;font-size:11.5px;color:#000;font-family:'Liberation Sans',sans-serif;transform:scaleX(0.9300);transform-origin:0 0;">30</div><div class="t" style="left:1569.50px;top:479.57px;font-size:11.5px;color:#000;font-family:'Liberation Sans',sans-serif;transform:scaleX(0.8974);transform-origin:0 0;">Y-min</div><div style="left:1596px;top:473px;width:140px;height:25px;background:#fff;border:1px solid #a9a9a9"></div><svg style="left:1719px;top:475px" width="15" height="21" viewBox="0 0 15 21"><rect x="0.5" y="0.5" width="14" height="10.0" fill="#ececec" stroke="#cfcfcf"/><rect x="0.5" y="10.5" width="14" height="10.0" fill="#ececec" stroke="#cfcfcf"/><line x1="0" y1="10.5" x2="15" y2="10.5" stroke="#b4b4b4"/><path d="M4.5 8.2 L7.5 5.2 L10.5 8.2 Z" fill="#000"/><path d="M4.5 14.2 L7.5 17.2 L10.5 14.2 Z" fill="#000"/></svg><div class="t" style="left:1700.04px;top:480.07px;font-size:11.5px;color:#000;font-family:'Liberation Sans',sans-serif;transform:scaleX(0.9300);transform-origin:0 0;">-40</div><div style="left:1456px;top:471px;width:89px;height:27px;border:1px solid #c6c6c6;box-shadow:inset 1px 1px 0 #fff, 1px 1px 0 #fff"></div><div class="t" style="left:1457.60px;top:479.57px;font-size:11.5px;color:#000;font-family:'Liberation Sans',sans-serif;transform:scaleX(0.8910);transform-origin:0 0;">Y x 1E</div><div style="left:1490px;top:474px;width:50px;height:22px;background:#fff;border:1px solid #a9a9a9"></div><svg style="left:1523px;top:476px" width="15" height="18" viewBox="0 0 15 18"><rect x="0.5" y="0.5" width="14" height="8.5" fill="#ececec" stroke="#cfcfcf"/><rect x="0.5" y="9.0" width="14" height="8.5" fill="#ececec" stroke="#cfcfcf"/><line x1="0" y1="9.0" x2="15" y2="9.0" stroke="#b4b4b4"/><path d="M4.5 7.5 L7.5 4.5 L10.5 7.5 Z" fill="#000"/><path d="M4.5 12.0 L7.5 15.0 L10.5 12.0 Z" fill="#000"/></svg><div class="t" style="left:1514.55px;top:479.57px;font-size:11.5px;color:#000;font-family:'Liberation Sans',sans-serif;transform:scaleX(0.9300);transform-origin:0 0;">0</div><div style="left:1743px;top:411px;width:157px;height:90px;border:1px solid #7f9ae6"></div><div style="left:1791px;top:410px;width:61px;height:3px;background:#f0f0f0"></div><div class="t" style="left:1795.30px;top:405.72px;font-size:12.5px;color:#333;font-family:'Liberation Sans',sans-serif;font-weight:bold;transform:scaleX(1.0174);transform-origin:0 0;">Plot Size</div><div class="t" style="left:1765.20px;top:452.37px;font-size:11.5px;color:#000;font-family:'Liberation Sans',sans-serif;transform:scaleX(0.9025);transform-origin:0 0;">Height</div><div style="left:1796px;top:446px;width:101px;height:26px;background:#fff;border:1px solid #a9a9a9"></div><svg style="left:1880px;top:448px" width="15" height="22" viewBox="0 0 15 22"><rect x="0.5" y="0.5" width="14" height="10.5" fill="#ececec" stroke="#cfcfcf"/><rect x="0.5" y="11.0" width="14" height="10.5" fill="#ececec" stroke="#cfcfcf"/><line x1="0" y1="11.0" x2="15" y2="11.0" stroke="#b4b4b4"/><path d="M4.5 8.5 L7.5 5.5 L10.5 8.5 Z" fill="#000"/><path d="M4.5 15.0 L7.5 18.0 L10.5 15.0 Z" fill="#000"/></svg><div class="t" style="left:1859.16px;top:453.57px;font-size:11.5px;color:#000;font-family:'Liberation Sans',sans-serif;transform:scaleX(0.9300);transform-origin:0 0;">963</div><div class="t" style="left:1768.20px;top:479.57px;font-size:11.5px;color:#000;font-family:'Liberation Sans',sans-serif;transform:scaleX(0.9185);transform-origin:0 0;">Width</div><div style="left:1796px;top:471px;width:101px;height:25px;background:#fff;border:1px solid #a9a9a9"></div><svg style="left:1880px;top:473px" width="15" height="21" viewBox="0 0 15 21"><rect x="0.5" y="0.5" width="14" height="10.0" fill="#ececec" stroke="#cfcfcf"/><rect x="0.5" y="10.5" width="14" height="10.0" fill="#ececec" stroke="#cfcfcf"/><line x1="0" y1="10.5" x2="15" y2="10.5" stroke="#b4b4b4"/><path d="M4.5 8.2 L7.5 5.2 L10.5 8.2 Z" fill="#000"/><path d="M4.5 14.2 L7.5 17.2 L10.5 14.2 Z" fill="#000"/></svg><div class="t" style="left:1850.24px;top:478.07px;font-size:11.5px;color:#000;font-family:'Liberation Sans',sans-serif;transform:scaleX(0.9300);transform-origin:0 0;">1,070</div><div style="left:1000px;top:516px;width:900px;height:62px;border:1px solid #7f9ae6"></div><div style="left:1404px;top:515px;width:91px;height:3px;background:#f0f0f0"></div><div class="t" style="left:1408.35px;top:510.72px;font-size:12.5px;color:#333;font-family:'Liberation Sans',sans-serif;font-weight:bold;transform:scaleX(0.9681);transform-origin:0 0;">Phase Folding</div><svg style="left:1008.3px;top:544px" width="14" height="14" viewBox="0 0 14 14"><circle cx="7" cy="7" r="6" fill="#fff" stroke="#333" stroke-width="1"/><circle cx="7" cy="7" r="3.2" fill="#333"/></svg><div class="t" style="left:1026.10px;top:545.87px;font-size:11.5px;color:#000;font-family:'Liberation Sans',sans-serif;transform:scaleX(0.9041);transform-origin:0 0;">Unphased</div><div style="left:1025px;top:544px;width:50px;height:14px;border:1px dotted #333"></div><svg style="left:1081.3px;top:544px" width="14" height="14" viewBox="0 0 14 14"><circle cx="7" cy="7" r="6" fill="#fff" stroke="#333" stroke-width="1"/></svg><div class="t" style="left:1098.30px;top:545.87px;font-size:11.5px;color:#000;font-family:'Liberation Sans',sans-serif;transform:scaleX(0.9099);transform-origin:0 0;">Days Since Tc</div><svg style="left:1172.2px;top:544px" width="14" height="14" viewBox="0 0 14 14"><circle cx="7" cy="7" r="6" fill="#fff" stroke="#c4c4c4" stroke-width="1"/></svg><div class="t" style="left:1189.30px;top:545.87px;font-size:11.5px;color:#8c8c8c;font-family:'Liberation Sans',sans-serif;transform:scaleX(0.9089);transform-origin:0 0;">Hours Since Tc</div><svg style="left:1267.4px;top:544px" width="14" height="14" viewBox="0 0 14 14"><circle cx="7" cy="7" r="6" fill="#fff" stroke="#c4c4c4" stroke-width="1"/></svg><div class="t" style="left:1284.50px;top:545.87px;font-size:11.5px;color:#8c8c8c;font-family:'Liberation Sans',sans-serif;transform:scaleX(0.8894);transform-origin:0 0;">Phase</div><div style="left:1321px;top:535px;width:132px;height:37px;border:1px solid #c6c6c6;box-shadow:inset 1px 1px 0 #fff, 1px 1px 0 #fff"></div><div style="left:1361px;top:534px;width:52px;height:3px;background:#f0f0f0"></div><div class="t" style="left:1363.60px;top:529.57px;font-size:11.5px;color:#555;font-family:'Liberation Sans',sans-serif;transform:scaleX(0.9113);transform-origin:0 0;">T0 (Days)</div><div style="left:1324px;top:544px;width:127px;height:25px;background:#f4f4f4;border:1px solid #a9a9a9"></div><svg style="left:1434px;top:546px" width="15" height="21" viewBox="0 0 15 21"><rect x="0.5" y="0.5" width="14" height="10.0" fill="#ececec" stroke="#cfcfcf"/><rect x="0.5" y="10.5" width="14" height="10.0" fill="#ececec" stroke="#cfcfcf"/><line x1="0" y1="10.5" x2="15" y2="10.5" stroke="#b4b4b4"/><path d="M4.5 8.2 L7.5 5.2 L10.5 8.2 Z" fill="#9a9a9a"/><path d="M4.5 14.2 L7.5 17.2 L10.5 14.2 Z" fill="#9a9a9a"/></svg><div class="t" style="left:1369.55px;top:551.07px;font-size:11.5px;color:#8c8c8c;font-family:'Liberation Sans',sans-serif;transform:scaleX(0.9300);transform-origin:0 0;">2456999.849</div><div style="left:1460px;top:535px;width:182px;height:37px;border:1px solid #c6c6c6;box-shadow:inset 1px 1px 0 #fff, 1px 1px 0 #fff"></div><div style="left:1514px;top:534px;width:71px;height:3px;background:#f0f0f0"></div><div class="t" style="left:1517.30px;top:529.57px;font-size:11.5px;color:#555;font-family:'Liberation Sans',sans-serif;transform:scaleX(0.9247);transform-origin:0 0;">Period (Days)</div><svg style="left:1466px;top:550px" width="13" height="13" viewBox="0 0 13 13"><rect x="0.5" y="0.5" width="12" height="12" fill="#fff" stroke="#c8c8c8"/></svg><div class="t" style="left:1482.30px;top:550.57px;font-size:11.5px;color:#8c8c8c;font-family:'Liberation Sans',sans-serif;transform:scaleX(0.8996);transform-origin:0 0;">Sync</div><div style="left:1511px;top:544px;width:128px;height:25px;background:#f4f4f4;border:1px solid #a9a9a9"></div><svg style="left:1622px;top:546px" width="15" height="21" viewBox="0 0 15 21"><rect x="0.5" y="0.5" width="14" height="10.0" fill="#ececec" stroke="#cfcfcf"/><rect x="0.5" y="10.5" width="14" height="10.0" fill="#ececec" stroke="#cfcfcf"/><line x1="0" y1="10.5" x2="15" y2="10.5" stroke="#b4b4b4"/><path d="M4.5 8.2 L7.5 5.2 L10.5 8.2 Z" fill="#9a9a9a"/><path d="M4.5 14.2 L7.5 17.2 L10.5 14.2 Z" fill="#9a9a9a"/></svg><div class="t" style="left:1592.74px;top:551.07px;font-size:11.5px;color:#8c8c8c;font-family:'Liberation Sans',sans-serif;transform:scaleX(0.9300);transform-origin:0 0;">0.617</div><div style="left:1646px;top:535px;width:136px;height:37px;border:1px solid #c6c6c6;box-shadow:inset 1px 1px 0 #fff, 1px 1px 0 #fff"></div><div style="left:1669px;top:534px;width:86px;height:3px;background:#f0f0f0"></div><div class="t" style="left:1672.40px;top:529.57px;font-size:11.5px;color:#555;font-family:'Liberation Sans',sans-serif;transform:scaleX(0.9412);transform-origin:0 0;">Duration (Hours)</div><div style="left:1649px;top:544px;width:129px;height:25px;background:#f4f4f4;border:1px solid #a9a9a9"></div><svg style="left:1761px;top:546px" width="15" height="21" viewBox="0 0 15 21"><rect x="0.5" y="0.5" width="14" height="10.0" fill="#ececec" stroke="#cfcfcf"/><rect x="0.5" y="10.5" width="14" height="10.0" fill="#ececec" stroke="#cfcfcf"/><line x1="0" y1="10.5" x2="15" y2="10.5" stroke="#b4b4b4"/><path d="M4.5 8.2 L7.5 5.2 L10.5 8.2 Z" fill="#9a9a9a"/><path d="M4.5 14.2 L7.5 17.2 L10.5 14.2 Z" fill="#9a9a9a"/></svg><div class="t" style="left:1751.55px;top:551.07px;font-size:11.5px;color:#8c8c8c;font-family:'Liberation Sans',sans-serif;transform:scaleX(0.9300);transform-origin:0 0;">0</div><svg style="left:1787px;top:545px" width="13" height="13" viewBox="0 0 13 13"><rect x="0.5" y="0.5" width="12" height="12" fill="#fff" stroke="#c8c8c8"/></svg><div class="t" style="left:1804.00px;top:545.87px;font-size:11.5px;color:#8c8c8c;font-family:'Liberation Sans',sans-serif;transform:scaleX(0.8831);transform-origin:0 0;">2xP</div><svg style="left:1830px;top:545px" width="13" height="13" viewBox="0 0 13 13"><rect x="0.5" y="0.5" width="12" height="12" fill="#fff" stroke="#c8c8c8"/></svg><div class="t" style="left:1846.40px;top:545.87px;font-size:11.5px;color:#8c8c8c;font-family:'Liberation Sans',sans-serif;transform:scaleX(0.9764);transform-origin:0 0;">odd/even</div><div style="left:1002px;top:592px;width:152px;height:65px;border:1px solid #7f9ae6"></div><div style="left:1036px;top:591px;width:84px;height:3px;background:#f0f0f0"></div><div class="t" style="left:1040.20px;top:586.72px;font-size:12.5px;color:#333;font-family:'Liberation Sans',sans-serif;font-weight:bold;transform:scaleX(0.9807);transform-origin:0 0;">Meridian Flip</div><div style="left:1009px;top:611px;width:41px;height:39px;border:1px solid #c6c6c6;box-shadow:inset 1px 1px 0 #fff, 1px 1px 0 #fff"></div><div style="left:1013px;top:610px;width:32px;height:3px;background:#f0f0f0"></div><div class="t" style="left:1015.55px;top:606.07px;font-size:11.5px;color:#000;font-family:'Liberation Sans',sans-serif;transform:scaleX(0.8865);transform-origin:0 0;">Show</div><svg style="left:1024px;top:626px" width="13" height="13" viewBox="0 0 13 13"><rect x="0.5" y="0.5" width="12" height="12" fill="#fff" stroke="#333"/></svg><div style="left:1060px;top:611px;width:83px;height:39px;border:1px solid #c6c6c6;box-shadow:inset 1px 1px 0 #fff, 1px 1px 0 #fff"></div><div style="left:1077px;top:610px;width:48px;height:3px;background:#f0f0f0"></div><div class="t" style="left:1079.75px;top:606.07px;font-size:11.5px;color:#000;font-family:'Liberation Sans',sans-serif;transform:scaleX(0.8897);transform-origin:0 0;">Flip Time</div><div style="left:1064px;top:622px;width:76px;height:25px;background:#fff;border:1px solid #a9a9a9"></div><svg style="left:1123px;top:624px" width="15" height="21" viewBox="0 0 15 21"><rect x="0.5" y="0.5" width="14" height="10.0" fill="#ececec" stroke="#cfcfcf"/><rect x="0.5" y="10.5" width="14" height="10.0" fill="#ececec" stroke="#cfcfcf"/><line x1="0" y1="10.5" x2="15" y2="10.5" stroke="#b4b4b4"/><path d="M4.5 8.2 L7.5 5.2 L10.5 8.2 Z" fill="#000"/><path d="M4.5 14.2 L7.5 17.2 L10.5 14.2 Z" fill="#000"/></svg><div class="t" style="left:1113.55px;top:629.07px;font-size:11.5px;color:#000;font-family:'Liberation Sans',sans-serif;transform:scaleX(0.9300);transform-origin:0 0;">0</div><div style="left:1164px;top:592px;width:530px;height:65px;border:1px solid #7f9ae6"></div><div style="left:1319px;top:591px;width:218px;height:3px;background:#f0f0f0"></div><div class="t" style="left:1323.35px;top:586.72px;font-size:12.5px;color:#333;font-family:'Liberation Sans',sans-serif;font-weight:bold;transform:scaleX(1.0059);transform-origin:0 0;">Fit and Normalize Region Selection</div><div style="left:1171px;top:611px;width:42px;height:39px;border:1px solid #c6c6c6;box-shadow:inset 1px 1px 0 #fff, 1px 1px 0 #fff"></div><div style="left:1174px;top:610px;width:32px;height:3px;background:#f0f0f0"></div><div class="t" style="left:1177.45px;top:606.07px;font-size:11.5px;color:#000;font-family:'Liberation Sans',sans-serif;transform:scaleX(0.8865);transform-origin:0 0;">Show</div><svg style="left:1186px;top:626px" width="13" height="13" viewBox="0 0 13 13"><rect x="0.5" y="0.5" width="12" height="12" fill="#fff" stroke="#333"/></svg><div style="left:1222px;top:611px;width:104px;height:39px;border:1px solid #c6c6c6;box-shadow:inset 1px 1px 0 #fff, 1px 1px 0 #fff"></div><div style="left:1250px;top:610px;width:48px;height:3px;background:#f0f0f0"></div><div class="t" style="left:1252.50px;top:606.07px;font-size:11.5px;color:#000;font-family:'Liberation Sans',sans-serif;transform:scaleX(0.9389);transform-origin:0 0;">Left Trim</div><svg style="left:1231px;top:628px" width="13" height="13" viewBox="0 0 13 13"><rect x="0.5" y="0.5" width="12" height="12" fill="#fff" stroke="#333"/><path d="M2.5 6.5 L5.5 9.5 L10.5 3" stroke="#333" stroke-width="1.3" fill="none"/></svg><div style="left:1248px;top:622px;width:75px;height:25px;background:#fff;border:1px solid #a9a9a9"></div><svg style="left:1306px;top:624px" width="15" height="21" viewBox="0 0 15 21"><rect x="0.5" y="0.5" width="14" height="10.0" fill="#ececec" stroke="#cfcfcf"/><rect x="0.5" y="10.5" width="14" height="10.0" fill="#ececec" stroke="#cfcfcf"/><line x1="0" y1="10.5" x2="15" y2="10.5" stroke="#b4b4b4"/><path d="M4.5 8.2 L7.5 5.2 L10.5 8.2 Z" fill="#000"/><path d="M4.5 14.2 L7.5 17.2 L10.5 14.2 Z" fill="#000"/></svg><div class="t" style="left:1258.39px;top:629.07px;font-size:11.5px;color:#000;font-family:'Liberation Sans',sans-serif;transform:scaleX(0.9300);transform-origin:0 0;">0.531532</div><div style="left:1336px;top:611px;width:83px;height:39px;border:1px solid #c6c6c6;box-shadow:inset 1px 1px 0 #fff, 1px 1px 0 #fff"></div><div style="left:1364px;top:610px;width:26px;height:3px;background:#f0f0f0"></div><div class="t" style="left:1366.80px;top:606.07px;font-size:11.5px;color:#000;font-family:'Liberation Sans',sans-serif;transform:scaleX(1.0427);transform-origin:0 0;">Left</div><div style="left:1341px;top:622px;width:75px;height:25px;background:#fff;border:1px solid #a9a9a9"></div><svg style="left:1399px;top:624px" width="15" height="21" viewBox="0 0 15 21"><rect x="0.5" y="0.5" width="14" height="10.0" fill="#ececec" stroke="#cfcfcf"/><rect x="0.5" y="10.5" width="14" height="10.0" fill="#ececec" stroke="#cfcfcf"/><line x1="0" y1="10.5" x2="15" y2="10.5" stroke="#b4b4b4"/><path d="M4.5 8.2 L7.5 5.2 L10.5 8.2 Z" fill="#000"/><path d="M4.5 14.2 L7.5 17.2 L10.5 14.2 Z" fill="#000"/></svg><div class="t" style="left:1351.89px;top:629.07px;font-size:11.5px;color:#000;font-family:'Liberation Sans',sans-serif;transform:scaleX(0.9300);transform-origin:0 0;">0.531532</div><div style="left:1429px;top:611px;width:47px;height:39px;border:1px solid #c6c6c6;box-shadow:inset 1px 1px 0 #fff, 1px 1px 0 #fff"></div><div style="left:1436px;top:610px;width:31px;height:3px;background:#f0f0f0"></div><div class="t" style="left:1439.20px;top:606.07px;font-size:11.5px;color:#000;font-family:'Liberation Sans',sans-serif;transform:scaleX(0.9313);transform-origin:0 0;">Copy</div><div style="left:1435px;top:621px;width:35px;height:25px;background:#d9d9d9;border:1px solid #c2c2c2"></div><svg style="left:1435px;top:621px" width="35" height="25" viewBox="0 0 35 25"><path d="M3.2 15 L10.4 10.2 L10.4 13.3 L12.5 13.3 C13 13.3 13.3 13 13.3 12.5 L13.3 5.2 L16.4 5.2 L16.4 13 C16.4 15.5 15.5 16.8 13 16.8 L10.4 16.8 L10.4 19.6 Z" fill="#56aaf6" stroke="#153f90" stroke-width="1.1" stroke-linejoin="round"/><path d="M31.3 15 L24.1 10.2 L24.1 13.3 L22 13.3 C21.5 13.3 21.2 13 21.2 12.5 L21.2 5.2 L18.1 5.2 L18.1 13 C18.1 15.5 19 16.8 21.5 16.8 L24.1 16.8 L24.1 19.6 Z" fill="#56aaf6" stroke="#153f90" stroke-width="1.1" stroke-linejoin="round"/></svg><div style="left:1487px;top:611px;width:82px;height:39px;border:1px solid #c6c6c6;box-shadow:inset 1px 1px 0 #fff, 1px 1px 0 #fff"></div><div style="left:1511px;top:610px;width:31px;height:3px;background:#f0f0f0"></div><div class="t" style="left:1514.10px;top:606.07px;font-size:11.5px;color:#000;font-family:'Liberation Sans',sans-serif;transform:scaleX(0.9313);transform-origin:0 0;">Right</div><div style="left:1491px;top:622px;width:75px;height:25px;background:#fff;border:1px solid #a9a9a9"></div><svg style="left:1549px;top:624px" width="15" height="21" viewBox="0 0 15 21"><rect x="0.5" y="0.5" width="14" height="10.0" fill="#ececec" stroke="#cfcfcf"/><rect x="0.5" y="10.5" width="14" height="10.0" fill="#ececec" stroke="#cfcfcf"/><line x1="0" y1="10.5" x2="15" y2="10.5" stroke="#b4b4b4"/><path d="M4.5 8.2 L7.5 5.2 L10.5 8.2 Z" fill="#000"/><path d="M4.5 14.2 L7.5 17.2 L10.5 14.2 Z" fill="#000"/></svg><div class="t" style="left:1501.89px;top:629.07px;font-size:11.5px;color:#000;font-family:'Liberation Sans',sans-serif;transform:scaleX(0.9300);transform-origin:0 0;">0.531532</div><div style="left:1579px;top:611px;width:105px;height:39px;border:1px solid #c6c6c6;box-shadow:inset 1px 1px 0 #fff, 1px 1px 0 #fff"></div><div style="left:1603px;top:610px;width:54px;height:3px;background:#f0f0f0"></div><div class="t" style="left:1606.10px;top:606.07px;font-size:11.5px;color:#000;font-family:'Liberation Sans',sans-serif;transform:scaleX(0.9161);transform-origin:0 0;">Right Trim</div><div style="left:1584px;top:622px;width:75px;height:25px;background:#f4f4f4;border:1px solid #a9a9a9"></div><svg style="left:1642px;top:624px" width="15" height="21" viewBox="0 0 15 21"><rect x="0.5" y="0.5" width="14" height="10.0" fill="#ececec" stroke="#cfcfcf"/><rect x="0.5" y="10.5" width="14" height="10.0" fill="#ececec" stroke="#cfcfcf"/><line x1="0" y1="10.5" x2="15" y2="10.5" stroke="#b4b4b4"/><path d="M4.5 8.2 L7.5 5.2 L10.5 8.2 Z" fill="#9a9a9a"/><path d="M4.5 14.2 L7.5 17.2 L10.5 14.2 Z" fill="#9a9a9a"/></svg><div class="t" style="left:1594.39px;top:629.07px;font-size:11.5px;color:#8c8c8c;font-family:'Liberation Sans',sans-serif;transform:scaleX(0.9300);transform-origin:0 0;">0.531532</div><svg style="left:1663px;top:628px" width="13" height="13" viewBox="0 0 13 13"><rect x="0.5" y="0.5" width="12" height="12" fill="#fff" stroke="#333"/></svg><div style="left:1704px;top:592px;width:191px;height:65px;border:1px solid #7f9ae6"></div><div style="left:1756px;top:591px;width:86px;height:3px;background:#f0f0f0"></div><div class="t" style="left:1759.85px;top:586.72px;font-size:12.5px;color:#333;font-family:'Liberation Sans',sans-serif;font-weight:bold;transform:scaleX(1.0180);transform-origin:0 0;">Other Panels</div><div style="left:1710px;top:603px;width:88px;height:22px;background:#e1e1e1;border:1px solid #adadad"></div><div class="t" style="left:1724.87px;top:608.57px;font-size:11.5px;color:#000;font-family:'Liberation Sans',sans-serif;transform:scaleX(0.9300);transform-origin:0 0;">Redraw Plot</div><div style="left:1801px;top:603px;width:87px;height:22px;background:#e1e1e1;border:1px solid #adadad"></div><div class="t" style="left:1822.20px;top:608.57px;font-size:11.5px;color:#000;font-family:'Liberation Sans',sans-serif;transform:scaleX(0.9300);transform-origin:0 0;">Add Data</div><div style="left:1710px;top:629px;width:88px;height:22px;background:#e1e1e1;border:1px solid #adadad"></div><div class="t" style="left:1738.74px;top:634.57px;font-size:11.5px;color:#000;font-family:'Liberation Sans',sans-serif;transform:scaleX(0.9300);transform-origin:0 0;">Y-data</div><div style="left:1801px;top:629px;width:87px;height:22px;background:#e1e1e1;border:1px solid #adadad"></div><div class="t" style="left:1820.73px;top:634.57px;font-size:11.5px;color:#000;font-family:'Liberation Sans',sans-serif;transform:scaleX(0.9300);transform-origin:0 0;">Ref. Stars</div></body></html>
